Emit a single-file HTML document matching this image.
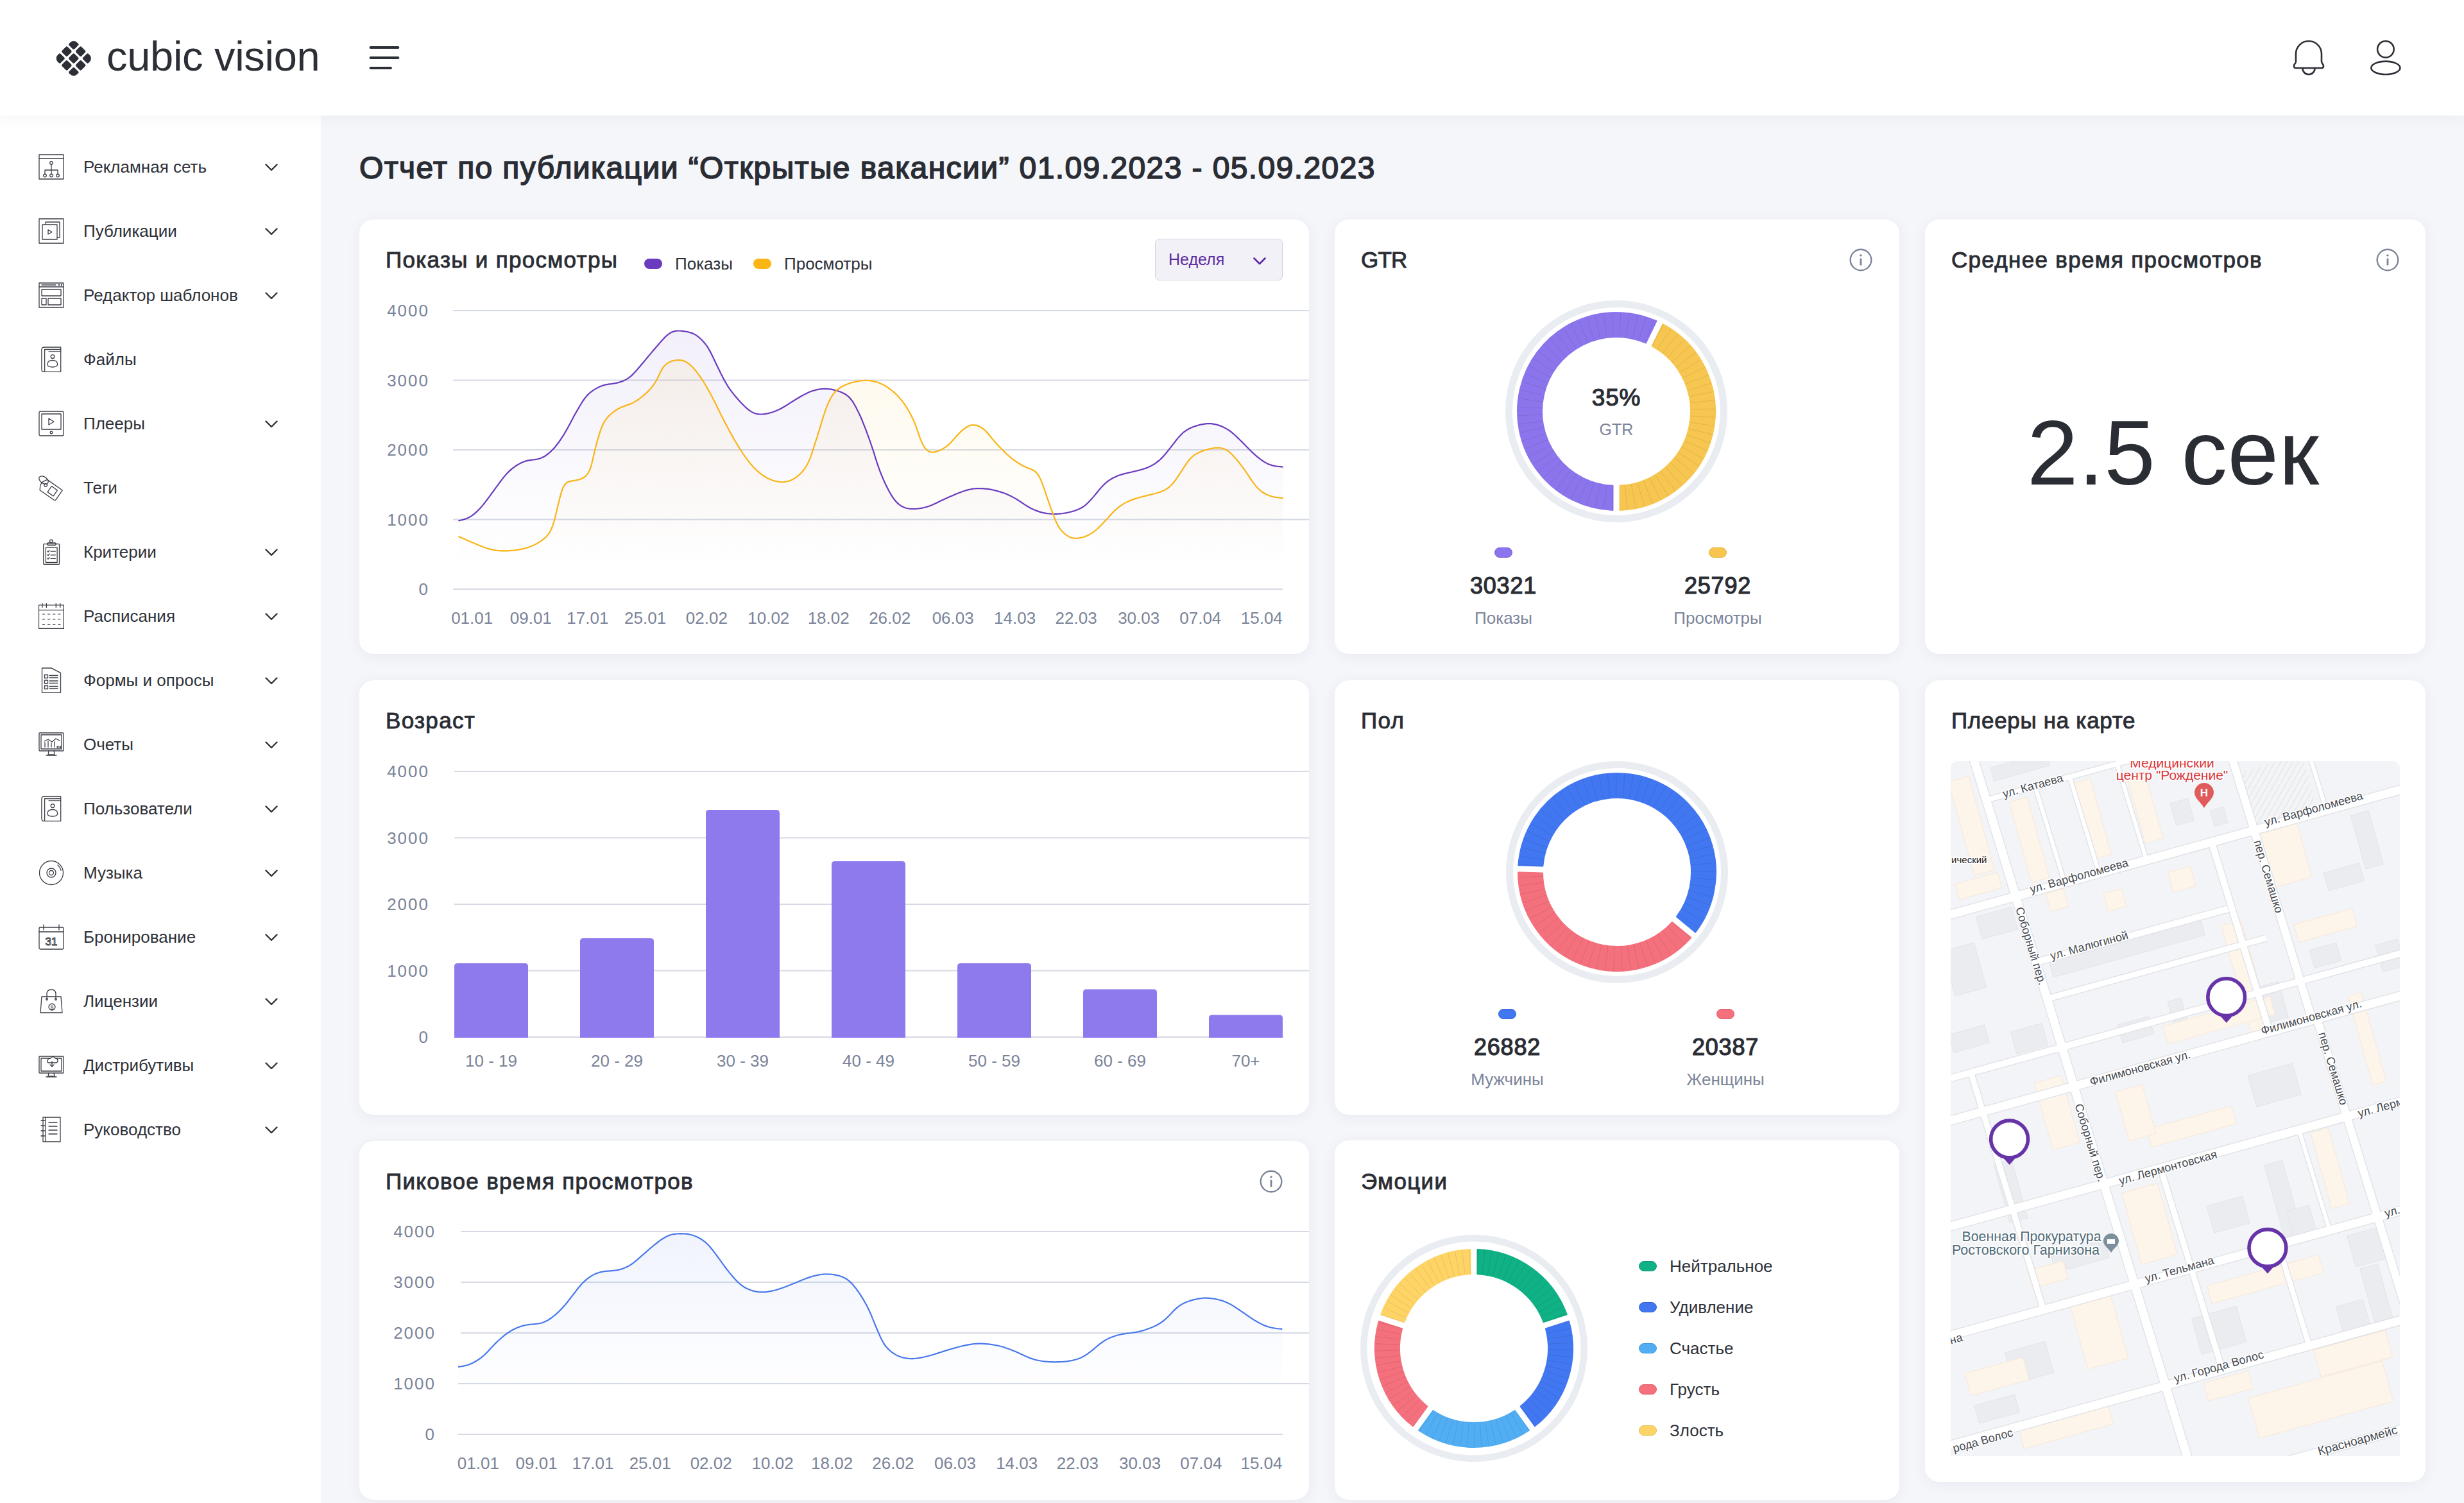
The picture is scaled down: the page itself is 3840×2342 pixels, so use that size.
<!DOCTYPE html><html><head><meta charset="utf-8"><style>
*{box-sizing:border-box;margin:0;padding:0}
html,body{width:3840px;height:2342px;overflow:hidden;background:#f5f6fa;font-family:"Liberation Sans", sans-serif;color:#2c2f36}
.abs{position:absolute}
.hdr{position:absolute;left:0;top:0;width:3840px;height:180px;background:#fff;box-shadow:0 6px 22px rgba(30,40,80,.045);z-index:3}
.side{position:absolute;left:0;top:180px;width:500px;height:2162px;background:#fff;z-index:1}
.item{position:absolute;left:60px;height:40px;width:400px}
.item svg.ic{position:absolute;left:0;top:0}
.item .t{position:absolute;left:70px;top:0;line-height:40px;font-size:26px;color:#2e3138;white-space:nowrap}
.item .ch{position:absolute;left:353px;top:13px}
.card{position:absolute;background:#fff;border-radius:22px;box-shadow:0 4px 22px rgba(40,50,90,.06)}
.ttl{position:absolute;font-size:35px;font-weight:400;color:#2a2d34;white-space:nowrap;line-height:40px;letter-spacing:1.3px;-webkit-text-stroke:0.9px #2a2d34;transform:translate(1px,-1px)}
.ax{position:absolute;font-size:26px;color:#7a8398;white-space:nowrap;line-height:30px}
.num{position:absolute;font-size:36px;font-weight:400;color:#2a2d34;text-align:center;line-height:40px;letter-spacing:0.8px;-webkit-text-stroke:1.2px #2a2d34}
.lbl{position:absolute;font-size:26px;color:#7b8499;text-align:center;line-height:30px}
.info{position:absolute}
</style></head><body>
<div class="hdr"><svg class="abs" style="left:0;top:0" width="160" height="180"><defs><clipPath id="lg"><rect x="93.30" y="69.50" width="43" height="43" rx="8"/></clipPath></defs><g transform="rotate(45 114.8 91)" clip-path="url(#lg)" fill="#2c2f36"><rect x="93.30" y="69.50" width="12.20" height="12.20" rx="2.2"/><rect x="108.70" y="69.50" width="12.20" height="12.20" rx="2.2"/><rect x="124.10" y="69.50" width="12.20" height="12.20" rx="2.2"/><rect x="93.30" y="84.90" width="12.20" height="12.20" rx="2.2"/><rect x="108.70" y="84.90" width="12.20" height="12.20" rx="2.2"/><rect x="124.10" y="84.90" width="12.20" height="12.20" rx="2.2"/><rect x="93.30" y="100.30" width="12.20" height="12.20" rx="2.2"/><rect x="108.70" y="100.30" width="12.20" height="12.20" rx="2.2"/><rect x="124.10" y="100.30" width="12.20" height="12.20" rx="2.2"/></g></svg><div class="abs" style="left:166px;top:50px;font-size:65px;line-height:76px;color:#2c2f36;letter-spacing:-0.3px">cubic vision</div><svg class="abs" style="left:575px;top:70px" width="50" height="40"><g stroke="#2c2f36" stroke-width="3.8" stroke-linecap="round"><line x1="2.5" y1="4" x2="45.5" y2="4"/><line x1="2.5" y1="20" x2="45.5" y2="20"/><line x1="2.5" y1="36" x2="34" y2="36"/></g></svg><svg class="abs" style="left:3570px;top:60px" width="56" height="64" viewBox="0 0 56 64"><g fill="none" stroke="#2c2f36" stroke-width="2.6" stroke-linejoin="round"><path d="M8,36 V24 A20,20 0 0 1 48,24 V36 Q48,38 50,40 Q51,41 51,43 Q51,46 48,46 H8 Q5,46 5,43 Q5,41 6,40 Q8,38 8,36 Z"/><path d="M18.5,46.5 A9.5,9.5 0 0 0 37.5,46.5"/></g></svg><svg class="abs" style="left:3690px;top:58px" width="56" height="64" viewBox="0 0 56 64"><g fill="none" stroke="#2c2f36" stroke-width="2.6"><circle cx="27.9" cy="18.8" r="12.8"/><ellipse cx="27.9" cy="47.8" rx="22.6" ry="10.2"/></g></svg></div><div class="side"></div><div class="item" style="top:240px;z-index:2"><svg class="ic" width="40" height="40" viewBox="0 0 40 40" fill="none" stroke="#3b3e46" stroke-width="1.3" stroke-linejoin="round" stroke-linecap="round"><rect x="1" y="1" width="38" height="38"/><line x1="1" y1="7" x2="39" y2="7"/><circle cx="20" cy="14" r="2.3"/><line x1="20" y1="16.3" x2="20" y2="32"/><path d="M10,32 V25 H30 V32"/><circle cx="10" cy="33.5" r="2.3"/><circle cx="20" cy="33.5" r="2.3"/><circle cx="30" cy="33.5" r="2.3"/></svg><div class="t">Рекламная сеть</div><div class="ch"><svg width="20" height="12" viewBox="0 0 20 12"><path d="M1.5,1.5 L10,10 L18.5,1.5" fill="none" stroke="#2e3138" stroke-width="2.4" stroke-linecap="round" stroke-linejoin="round"/></svg></div></div><div class="item" style="top:340px;z-index:2"><svg class="ic" width="40" height="40" viewBox="0 0 40 40" fill="none" stroke="#3b3e46" stroke-width="1.3" stroke-linejoin="round" stroke-linecap="round"><rect x="1" y="1" width="38" height="38"/><rect x="11" y="6" width="22" height="24"/><rect x="6" y="10" width="23" height="23" fill="#fff"/><path d="M15,18 L21,21.5 L15,25 Z"/></svg><div class="t">Публикации</div><div class="ch"><svg width="20" height="12" viewBox="0 0 20 12"><path d="M1.5,1.5 L10,10 L18.5,1.5" fill="none" stroke="#2e3138" stroke-width="2.4" stroke-linecap="round" stroke-linejoin="round"/></svg></div></div><div class="item" style="top:440px;z-index:2"><svg class="ic" width="40" height="40" viewBox="0 0 40 40" fill="none" stroke="#3b3e46" stroke-width="1.3" stroke-linejoin="round" stroke-linecap="round"><rect x="1" y="1" width="38" height="38"/><line x1="1" y1="7" x2="39" y2="7"/><line x1="5" y1="4" x2="27" y2="4"/><circle cx="32" cy="4" r=".6"/><circle cx="36" cy="4" r=".6"/><rect x="5" y="11" width="30" height="10"/><rect x="5" y="25" width="7" height="10"/><rect x="15" y="25" width="20" height="10"/></svg><div class="t">Редактор шаблонов</div><div class="ch"><svg width="20" height="12" viewBox="0 0 20 12"><path d="M1.5,1.5 L10,10 L18.5,1.5" fill="none" stroke="#2e3138" stroke-width="2.4" stroke-linecap="round" stroke-linejoin="round"/></svg></div></div><div class="item" style="top:540px;z-index:2"><svg class="ic" width="40" height="40" viewBox="0 0 40 40" fill="none" stroke="#3b3e46" stroke-width="1.3" stroke-linejoin="round" stroke-linecap="round"><path d="M9,1 H34.7 V39.4 H9 Q4.9,39.4 4.9,35.4 V5 Q4.9,1 9,1 Z"/><line x1="9.6" y1="4.5" x2="9.6" y2="39.4"/><path d="M9.6,4.5 H34.7"/><line x1="16" y1="7.7" x2="34.7" y2="7.7" stroke-width="1"/><circle cx="22" cy="15.7" r="2.8"/><path d="M14,27.5 Q14,21.5 21.8,21.5 Q29.6,21.5 29.6,27.5 Q29.6,32 21.8,32 Q14,32 14,27.5 Z"/></svg><div class="t">Файлы</div></div><div class="item" style="top:640px;z-index:2"><svg class="ic" width="40" height="40" viewBox="0 0 40 40" fill="none" stroke="#3b3e46" stroke-width="1.3" stroke-linejoin="round" stroke-linecap="round"><rect x="1" y="1" width="38" height="38" rx="2"/><rect x="5" y="5" width="30" height="24"/><path d="M16,12 L24,17 L16,22 Z"/><circle cx="20" cy="34" r="1.8"/></svg><div class="t">Плееры</div><div class="ch"><svg width="20" height="12" viewBox="0 0 20 12"><path d="M1.5,1.5 L10,10 L18.5,1.5" fill="none" stroke="#2e3138" stroke-width="2.4" stroke-linecap="round" stroke-linejoin="round"/></svg></div></div><div class="item" style="top:740px;z-index:2"><svg class="ic" width="40" height="40" viewBox="0 0 40 40" fill="none" stroke="#3b3e46" stroke-width="1.3" stroke-linejoin="round" stroke-linecap="round"><g transform="translate(18.5 23) rotate(35)"><path d="M-17,-3 L-13,-10 L16,-10 L16,10 L-13,10 L-17,3 Z"/><rect x="-1.5" y="-5.5" width="11" height="11"/><circle cx="-10" cy="-1.5" r="2.3"/></g><ellipse cx="8" cy="8" rx="8" ry="5" transform="rotate(35 8 8)"/></svg><div class="t">Теги</div></div><div class="item" style="top:840px;z-index:2"><svg class="ic" width="40" height="40" viewBox="0 0 40 40" fill="none" stroke="#3b3e46" stroke-width="1.3" stroke-linejoin="round" stroke-linecap="round"><rect x="7.7" y="7.6" width="24.8" height="31.7" rx="1"/><rect x="11.4" y="13.2" width="17.7" height="23.3"/><rect x="13.3" y="5.8" width="14" height="3.7" rx="1.8"/><circle cx="19.8" cy="3.2" r="2.3"/><path d="M13.8,18.8 l1.2,1.2 l2,-2.6 M13.8,24.4 l1.2,1.2 l2,-2.6 M13.8,30 l1.2,1.2 l2,-2.6"/><line x1="19" y1="19.2" x2="26.3" y2="19.2"/><line x1="19" y1="24.8" x2="26.3" y2="24.8"/><line x1="19" y1="30.4" x2="26.3" y2="30.4"/></svg><div class="t">Критерии</div><div class="ch"><svg width="20" height="12" viewBox="0 0 20 12"><path d="M1.5,1.5 L10,10 L18.5,1.5" fill="none" stroke="#2e3138" stroke-width="2.4" stroke-linecap="round" stroke-linejoin="round"/></svg></div></div><div class="item" style="top:940px;z-index:2"><svg class="ic" width="40" height="40" viewBox="0 0 40 40" fill="none" stroke="#3b3e46" stroke-width="1.3" stroke-linejoin="round" stroke-linecap="round"><rect x="0.5" y="2.8" width="38.9" height="36.6"/><line x1="0.5" y1="10.7" x2="39.4" y2="10.7"/><line x1="5.8" y1="0" x2="5.8" y2="6.4"/><line x1="12.4" y1="0" x2="12.4" y2="6.4"/><line x1="27.3" y1="0" x2="27.3" y2="6.4"/><line x1="33.8" y1="0" x2="33.8" y2="6.4"/><g stroke-dasharray="3.3 4.8" stroke-width="1.1"><line x1="6.4" y1="17" x2="36" y2="17"/><line x1="6.4" y1="25" x2="36" y2="25"/><line x1="6.4" y1="33.4" x2="36" y2="33.4"/></g></svg><div class="t">Расписания</div><div class="ch"><svg width="20" height="12" viewBox="0 0 20 12"><path d="M1.5,1.5 L10,10 L18.5,1.5" fill="none" stroke="#2e3138" stroke-width="2.4" stroke-linecap="round" stroke-linejoin="round"/></svg></div></div><div class="item" style="top:1040px;z-index:2"><svg class="ic" width="40" height="40" viewBox="0 0 40 40" fill="none" stroke="#3b3e46" stroke-width="1.3" stroke-linejoin="round" stroke-linecap="round"><path d="M5.5,1 H20 L34.5,8.5 V39.5 H5.5 Z" /><path d="M20,1 L34.5,8.5"/><rect x="9.5" y="11.5" width="5" height="5"/><rect x="9.5" y="20" width="5" height="5"/><rect x="9.5" y="28.5" width="5" height="5"/><line x1="17" y1="12.5" x2="30" y2="12.5"/><line x1="17" y1="16" x2="30" y2="16"/><line x1="17" y1="21" x2="30" y2="21"/><line x1="17" y1="24.5" x2="30" y2="24.5"/><line x1="17" y1="29.5" x2="30" y2="29.5"/><line x1="17" y1="33" x2="30" y2="33"/></svg><div class="t">Формы и опросы</div><div class="ch"><svg width="20" height="12" viewBox="0 0 20 12"><path d="M1.5,1.5 L10,10 L18.5,1.5" fill="none" stroke="#2e3138" stroke-width="2.4" stroke-linecap="round" stroke-linejoin="round"/></svg></div></div><div class="item" style="top:1140px;z-index:2"><svg class="ic" width="40" height="40" viewBox="0 0 40 40" fill="none" stroke="#3b3e46" stroke-width="1.3" stroke-linejoin="round" stroke-linecap="round"><rect x="1" y="2" width="38" height="28" rx="1"/><rect x="4" y="5" width="32" height="22"/><path d="M9,15 L15,12 L21,16 L27,11 L33,14"/><line x1="10" y1="24" x2="10" y2="17"/><line x1="15" y1="24" x2="15" y2="15"/><line x1="20" y1="24" x2="20" y2="18"/><line x1="25" y1="24" x2="25" y2="16"/><circle cx="30" cy="24" r="1"/><circle cx="34" cy="24" r="1"/><path d="M16,30 L15,36 H25 L24,30"/><line x1="12" y1="37" x2="28" y2="37"/></svg><div class="t">Очеты</div><div class="ch"><svg width="20" height="12" viewBox="0 0 20 12"><path d="M1.5,1.5 L10,10 L18.5,1.5" fill="none" stroke="#2e3138" stroke-width="2.4" stroke-linecap="round" stroke-linejoin="round"/></svg></div></div><div class="item" style="top:1240px;z-index:2"><svg class="ic" width="40" height="40" viewBox="0 0 40 40" fill="none" stroke="#3b3e46" stroke-width="1.3" stroke-linejoin="round" stroke-linecap="round"><path d="M9,1 H34.7 V39.4 H9 Q4.9,39.4 4.9,35.4 V5 Q4.9,1 9,1 Z"/><line x1="9.6" y1="4.5" x2="9.6" y2="39.4"/><path d="M9.6,4.5 H34.7"/><line x1="16" y1="7.7" x2="34.7" y2="7.7" stroke-width="1"/><circle cx="22" cy="15.7" r="2.8"/><path d="M14,27.5 Q14,21.5 21.8,21.5 Q29.6,21.5 29.6,27.5 Q29.6,32 21.8,32 Q14,32 14,27.5 Z"/></svg><div class="t">Пользователи</div><div class="ch"><svg width="20" height="12" viewBox="0 0 20 12"><path d="M1.5,1.5 L10,10 L18.5,1.5" fill="none" stroke="#2e3138" stroke-width="2.4" stroke-linecap="round" stroke-linejoin="round"/></svg></div></div><div class="item" style="top:1340px;z-index:2"><svg class="ic" width="40" height="40" viewBox="0 0 40 40" fill="none" stroke="#3b3e46" stroke-width="1.3" stroke-linejoin="round" stroke-linecap="round"><circle cx="20" cy="20" r="18.5"/><circle cx="20" cy="20" r="7"/><circle cx="20" cy="20" r="3.5"/><path d="M30,8 A15,15 0 0 1 35,16"/></svg><div class="t">Музыка</div><div class="ch"><svg width="20" height="12" viewBox="0 0 20 12"><path d="M1.5,1.5 L10,10 L18.5,1.5" fill="none" stroke="#2e3138" stroke-width="2.4" stroke-linecap="round" stroke-linejoin="round"/></svg></div></div><div class="item" style="top:1440px;z-index:2"><svg class="ic" width="40" height="40" viewBox="0 0 40 40" fill="none" stroke="#3b3e46" stroke-width="1.3" stroke-linejoin="round" stroke-linecap="round"><rect x="1" y="5" width="38" height="34" rx="2"/><line x1="1" y1="12" x2="39" y2="12"/><line x1="8" y1="1" x2="8" y2="9"/><line x1="32" y1="1" x2="32" y2="9"/><text x="20" y="33" font-family="Liberation Sans" font-size="17" text-anchor="middle" fill="none" stroke="#3b3e46" stroke-width="1">31</text></svg><div class="t">Бронирование</div><div class="ch"><svg width="20" height="12" viewBox="0 0 20 12"><path d="M1.5,1.5 L10,10 L18.5,1.5" fill="none" stroke="#2e3138" stroke-width="2.4" stroke-linecap="round" stroke-linejoin="round"/></svg></div></div><div class="item" style="top:1540px;z-index:2"><svg class="ic" width="40" height="40" viewBox="0 0 40 40" fill="none" stroke="#3b3e46" stroke-width="1.3" stroke-linejoin="round" stroke-linecap="round"><path d="M5,13 H35 L37,38 H3 Z"/><path d="M13,17 V9 Q13,2 20,2 Q27,2 27,9 V17"/><circle cx="13" cy="17" r="1.3"/><circle cx="27" cy="17" r="1.3"/><circle cx="21" cy="29" r="5"/><text x="21" y="32.5" font-family="Liberation Sans" font-size="9" text-anchor="middle" fill="#3b3e46" stroke="none">$</text></svg><div class="t">Лицензии</div><div class="ch"><svg width="20" height="12" viewBox="0 0 20 12"><path d="M1.5,1.5 L10,10 L18.5,1.5" fill="none" stroke="#2e3138" stroke-width="2.4" stroke-linecap="round" stroke-linejoin="round"/></svg></div></div><div class="item" style="top:1640px;z-index:2"><svg class="ic" width="40" height="40" viewBox="0 0 40 40" fill="none" stroke="#3b3e46" stroke-width="1.3" stroke-linejoin="round" stroke-linecap="round"><rect x="1" y="6" width="38" height="26" rx="1"/><rect x="4" y="9" width="32" height="20"/><path d="M14,14 Q14,9 19,9 Q22,4 26,9 Q30,9 30,13 Q30,16 26,16 H16 Q14,16 14,14 Z" fill="#fff"/><line x1="21" y1="14" x2="21" y2="22"/><path d="M18,19 L21,22 L24,19"/><path d="M16,32 L15,37 H25 L24,32"/><line x1="12" y1="38" x2="28" y2="38"/></svg><div class="t">Дистрибутивы</div><div class="ch"><svg width="20" height="12" viewBox="0 0 20 12"><path d="M1.5,1.5 L10,10 L18.5,1.5" fill="none" stroke="#2e3138" stroke-width="2.4" stroke-linecap="round" stroke-linejoin="round"/></svg></div></div><div class="item" style="top:1740px;z-index:2"><svg class="ic" width="40" height="40" viewBox="0 0 40 40" fill="none" stroke="#3b3e46" stroke-width="1.3" stroke-linejoin="round" stroke-linecap="round"><rect x="7" y="1" width="27" height="38"/><line x1="11" y1="1" x2="11" y2="39"/><g><line x1="4" y1="6" x2="10" y2="6"/><line x1="4" y1="14" x2="10" y2="14"/><line x1="4" y1="22" x2="10" y2="22"/><line x1="4" y1="30" x2="10" y2="30"/></g><line x1="16" y1="9" x2="29" y2="9"/><line x1="16" y1="15" x2="29" y2="15"/><line x1="16" y1="21" x2="29" y2="21"/><line x1="16" y1="27" x2="29" y2="27"/></svg><div class="t">Руководство</div><div class="ch"><svg width="20" height="12" viewBox="0 0 20 12"><path d="M1.5,1.5 L10,10 L18.5,1.5" fill="none" stroke="#2e3138" stroke-width="2.4" stroke-linecap="round" stroke-linejoin="round"/></svg></div></div><div class="abs" style="left:560px;top:234px;font-size:48px;font-weight:400;line-height:56px;color:#2a2d34;white-space:nowrap;letter-spacing:1.4px;-webkit-text-stroke:1.6px #2a2d34">Отчет по публикации “Открытые вакансии” 01.09.2023 - 05.09.2023</div><div class="card" style="left:560px;top:342px;width:1480px;height:677px"></div><div class="ttl" style="left:600px;top:386px">Показы и просмотры</div><div class="abs" style="left:1004px;top:403px;width:28px;height:16px;border-radius:8px;background:#6a3bbf"></div><div class="ax" style="left:1052px;top:396px;color:#2e3138">Показы</div><div class="abs" style="left:1174px;top:403px;width:28px;height:16px;border-radius:8px;background:#fbb515"></div><div class="ax" style="left:1222px;top:396px;color:#2e3138">Просмотры</div><div class="abs" style="left:1800px;top:372px;width:199px;height:65px;border-radius:7px;background:#f3f1f8;border:1.6px solid #cfd3df"></div><div class="abs" style="left:1821px;top:389px;font-size:25px;line-height:30px;color:#5b2aa0">Неделя</div><div class="abs" style="left:1953px;top:399px"><svg width="20" height="12" viewBox="0 0 20 12"><path d="M1.5,1.5 L10,10 L18.5,1.5" fill="none" stroke="#5b2aa0" stroke-width="2.6" stroke-linecap="round" stroke-linejoin="round"/></svg></div><div class="ax" style="left:549px;width:120px;text-align:right;top:469px;letter-spacing:2px">4000</div><div class="ax" style="left:549px;width:120px;text-align:right;top:577.5px;letter-spacing:2px">3000</div><div class="ax" style="left:549px;width:120px;text-align:right;top:686px;letter-spacing:2px">2000</div><div class="ax" style="left:549px;width:120px;text-align:right;top:794.5px;letter-spacing:2px">1000</div><div class="ax" style="left:549px;width:120px;text-align:right;top:903px;letter-spacing:2px">0</div><svg class="abs" style="left:0;top:0" width="2100" height="1100"><defs><linearGradient id="gp" x1="0" y1="0" x2="0" y2="1" gradientUnits="objectBoundingBox"><stop offset="0" stop-color="#6c4cc4" stop-opacity="0.085"/><stop offset="1" stop-color="#6c4cc4" stop-opacity="0"/></linearGradient><linearGradient id="gy" x1="0" y1="0" x2="0" y2="1"><stop offset="0" stop-color="#f5b820" stop-opacity="0.08"/><stop offset="1" stop-color="#f5b820" stop-opacity="0"/></linearGradient></defs><line x1="706" y1="484" x2="2040" y2="484" stroke="#d6dae3" stroke-width="2"/><line x1="706" y1="592.5" x2="2040" y2="592.5" stroke="#d6dae3" stroke-width="2"/><line x1="706" y1="701" x2="2040" y2="701" stroke="#d6dae3" stroke-width="2"/><line x1="706" y1="809.5" x2="2040" y2="809.5" stroke="#d6dae3" stroke-width="2"/><line x1="706" y1="918" x2="1999" y2="918" stroke="#d6dae3" stroke-width="2"/><path d="M714.4,811.3 L718.8,810.5 L720.9,809.9 L723.4,809.3 L726.0,808.4 L728.7,807.3 L731.3,806.1 L733.9,804.6 L736.3,802.9 L738.7,801.1 L740.9,799.1 L743.1,797.1 L745.3,795.0 L747.3,792.9 L749.4,790.7 L751.4,788.4 L753.3,786.1 L755.2,783.8 L757.0,781.4 L758.8,779.0 L760.6,776.6 L762.4,774.2 L764.2,771.8 L765.9,769.4 L767.7,766.9 L769.5,764.5 L771.2,762.1 L773.0,759.7 L774.8,757.2 L776.5,754.8 L778.3,752.4 L780.1,750.0 L781.9,747.6 L783.7,745.2 L785.6,742.9 L787.5,740.6 L789.5,738.3 L791.6,736.2 L793.7,734.1 L795.9,732.1 L798.2,730.2 L800.6,728.4 L803.0,726.6 L805.5,725.0 L808.1,723.4 L810.7,722.0 L813.3,720.7 L816.1,719.5 L818.9,718.6 L821.7,717.8 L824.6,717.2 L827.6,716.8 L830.5,716.5 L833.5,716.2 L836.4,715.7 L839.2,715.0 L842.0,714.2 L844.8,713.0 L847.4,711.7 L850.0,710.2 L852.4,708.5 L854.8,706.7 L857.0,704.8 L859.2,702.8 L861.3,700.6 L863.3,698.4 L865.3,696.2 L867.2,693.8 L869.0,691.5 L870.8,689.0 L872.5,686.6 L874.2,684.1 L875.9,681.6 L877.5,679.1 L879.1,676.6 L880.6,674.0 L882.1,671.4 L883.6,668.8 L885.0,666.2 L886.5,663.5 L887.9,660.9 L889.3,658.2 L890.7,655.6 L892.1,652.9 L893.5,650.3 L894.9,647.6 L896.4,645.0 L897.9,642.4 L899.4,639.8 L900.9,637.2 L902.4,634.6 L903.9,632.0 L905.5,629.5 L907.0,626.9 L908.7,624.4 L910.4,622.0 L912.2,619.6 L914.1,617.3 L916.1,615.1 L918.2,613.0 L920.5,611.1 L922.9,609.3 L925.3,607.6 L927.9,606.1 L930.5,604.6 L933.1,603.3 L935.9,602.1 L938.6,601.0 L941.4,600.1 L944.3,599.3 L947.2,598.8 L950.1,598.4 L953.0,598.1 L955.9,597.7 L958.9,597.2 L961.8,596.6 L964.6,595.8 L967.5,594.9 L970.3,593.9 L973.0,592.8 L975.7,591.4 L978.2,589.9 L980.6,588.2 L982.9,586.4 L985.1,584.4 L987.2,582.3 L989.3,580.1 L991.3,577.9 L993.3,575.6 L995.2,573.3 L997.2,571.1 L999.1,568.8 L1001.0,566.5 L1003.0,564.2 L1004.9,561.9 L1006.8,559.6 L1008.7,557.2 L1010.6,554.9 L1012.6,552.6 L1014.5,550.4 L1016.4,548.1 L1018.4,545.8 L1020.4,543.5 L1022.3,541.2 L1024.3,539.0 L1026.2,536.7 L1028.2,534.4 L1030.1,532.2 L1032.1,529.9 L1034.2,527.7 L1036.2,525.6 L1038.4,523.5 L1040.6,521.6 L1043.0,519.8 L1045.5,518.3 L1048.1,517.1 L1050.8,516.2 L1053.6,515.7 L1056.5,515.5 L1059.5,515.5 L1062.4,515.7 L1065.4,516.1 L1068.3,516.5 L1071.3,517.0 L1074.2,517.7 L1077.0,518.6 L1079.7,519.6 L1082.4,520.9 L1084.9,522.4 L1087.3,524.1 L1089.7,526.0 L1091.9,528.0 L1094.0,530.0 L1096.1,532.2 L1098.0,534.5 L1099.9,536.8 L1101.6,539.2 L1103.3,541.7 L1104.8,544.3 L1106.3,546.9 L1107.7,549.5 L1109.1,552.2 L1110.4,554.9 L1111.7,557.6 L1112.9,560.3 L1114.2,563.0 L1115.5,565.7 L1116.8,568.4 L1118.1,571.1 L1119.4,573.8 L1120.8,576.5 L1122.1,579.2 L1123.4,581.9 L1124.8,584.6 L1126.1,587.3 L1127.5,589.9 L1128.9,592.6 L1130.4,595.2 L1131.9,597.8 L1133.4,600.3 L1135.0,602.9 L1136.7,605.4 L1138.4,607.8 L1140.2,610.2 L1142.0,612.6 L1143.9,614.9 L1145.8,617.2 L1147.8,619.5 L1149.7,621.8 L1151.7,624.0 L1153.7,626.3 L1155.8,628.4 L1157.9,630.6 L1160.0,632.7 L1162.2,634.8 L1164.4,636.7 L1166.7,638.6 L1169.1,640.4 L1171.6,641.9 L1174.2,643.2 L1176.9,644.2 L1179.7,644.9 L1182.6,645.3 L1185.5,645.5 L1188.5,645.4 L1191.4,645.1 L1194.4,644.6 L1197.3,644.1 L1200.2,643.3 L1203.1,642.5 L1205.9,641.5 L1208.7,640.4 L1211.4,639.3 L1214.1,638.0 L1216.8,636.7 L1219.4,635.2 L1222.0,633.7 L1224.6,632.2 L1227.1,630.6 L1229.7,629.0 L1232.2,627.4 L1234.7,625.8 L1237.3,624.2 L1239.8,622.6 L1242.4,621.0 L1245.0,619.5 L1247.5,618.0 L1250.2,616.5 L1252.8,615.1 L1255.4,613.7 L1258.1,612.4 L1260.9,611.1 L1263.6,610.0 L1266.4,609.0 L1269.3,608.2 L1272.2,607.4 L1275.1,606.8 L1278.0,606.3 L1281.0,606.0 L1284.0,605.8 L1286.9,605.8 L1289.9,606.0 L1292.9,606.3 L1295.8,606.7 L1298.7,607.3 L1301.6,608.1 L1304.5,608.9 L1307.4,609.8 L1310.2,610.8 L1312.9,612.0 L1315.5,613.3 L1318.1,614.8 L1320.5,616.5 L1322.7,618.4 L1324.7,620.5 L1326.6,622.8 L1328.4,625.2 L1330.0,627.7 L1331.6,630.3 L1333.0,632.9 L1334.5,635.5 L1335.8,638.2 L1337.2,640.9 L1338.5,643.6 L1339.7,646.3 L1341.0,649.0 L1342.2,651.8 L1343.4,654.5 L1344.5,657.3 L1345.6,660.1 L1346.7,662.8 L1347.8,665.6 L1348.9,668.4 L1350.0,671.2 L1351.0,674.1 L1352.0,676.9 L1353.1,679.7 L1354.1,682.5 L1355.1,685.3 L1356.1,688.2 L1357.1,691.0 L1358.0,693.8 L1359.0,696.7 L1359.9,699.5 L1360.9,702.4 L1361.8,705.2 L1362.7,708.1 L1363.6,711.0 L1364.5,713.8 L1365.4,716.7 L1366.3,719.5 L1367.2,722.4 L1368.2,725.2 L1369.2,728.1 L1370.2,730.9 L1371.2,733.7 L1372.3,736.5 L1373.4,739.3 L1374.6,742.1 L1375.7,744.8 L1376.9,747.6 L1378.1,750.3 L1379.4,753.1 L1380.7,755.8 L1382.0,758.5 L1383.3,761.1 L1384.7,763.8 L1386.1,766.4 L1387.6,769.0 L1389.2,771.6 L1390.8,774.1 L1392.5,776.6 L1394.3,779.0 L1396.2,781.2 L1398.2,783.4 L1400.4,785.4 L1402.7,787.2 L1405.1,788.8 L1407.7,790.1 L1410.5,791.2 L1413.3,792.0 L1416.2,792.5 L1419.1,792.9 L1422.1,793.0 L1425.0,793.0 L1428.0,792.8 L1431.0,792.5 L1434.0,792.1 L1436.9,791.6 L1439.8,791.0 L1442.7,790.3 L1445.6,789.4 L1448.4,788.5 L1451.2,787.4 L1454.0,786.3 L1456.7,785.0 L1459.4,783.8 L1462.1,782.4 L1464.8,781.1 L1467.5,779.8 L1470.2,778.5 L1472.9,777.2 L1475.6,776.0 L1478.4,774.7 L1481.1,773.5 L1483.9,772.4 L1486.6,771.2 L1489.4,770.0 L1492.2,768.9 L1495.0,767.8 L1497.8,766.7 L1500.6,765.7 L1503.4,764.7 L1506.3,763.9 L1509.2,763.1 L1512.1,762.5 L1515.0,761.9 L1518.0,761.5 L1521.0,761.2 L1523.9,761.1 L1526.9,761.1 L1529.9,761.1 L1532.9,761.3 L1535.9,761.6 L1538.9,761.9 L1541.8,762.4 L1544.8,762.9 L1547.7,763.5 L1550.6,764.1 L1553.5,764.9 L1556.4,765.7 L1559.3,766.6 L1562.1,767.5 L1564.9,768.5 L1567.7,769.6 L1570.5,770.8 L1573.2,772.0 L1575.9,773.3 L1578.6,774.6 L1581.2,776.1 L1583.8,777.6 L1586.3,779.2 L1588.8,780.9 L1591.3,782.5 L1593.8,784.2 L1596.3,785.9 L1598.8,787.4 L1601.4,789.0 L1604.0,790.5 L1606.6,791.9 L1609.3,793.2 L1612.0,794.5 L1614.8,795.6 L1617.6,796.6 L1620.4,797.6 L1623.3,798.4 L1626.2,799.1 L1629.1,799.6 L1632.1,800.1 L1635.1,800.5 L1638.0,800.7 L1641.0,800.8 L1644.0,800.9 L1647.0,800.8 L1650.0,800.6 L1653.0,800.3 L1656.0,800.0 L1658.9,799.6 L1661.9,799.1 L1664.8,798.5 L1667.7,797.8 L1670.6,797.1 L1673.5,796.3 L1676.3,795.3 L1679.1,794.3 L1681.9,793.1 L1684.5,791.8 L1687.1,790.3 L1689.5,788.6 L1691.9,786.8 L1694.1,784.8 L1696.2,782.7 L1698.3,780.6 L1700.3,778.4 L1702.3,776.1 L1704.3,773.9 L1706.2,771.6 L1708.1,769.3 L1710.0,767.0 L1711.9,764.6 L1713.9,762.3 L1715.8,760.1 L1717.8,757.8 L1719.9,755.7 L1722.0,753.6 L1724.3,751.7 L1726.6,749.8 L1729.0,748.1 L1731.5,746.5 L1734.1,745.0 L1736.8,743.7 L1739.5,742.4 L1742.3,741.3 L1745.1,740.3 L1747.9,739.4 L1750.8,738.6 L1753.7,737.8 L1756.6,737.1 L1759.6,736.4 L1762.5,735.7 L1765.4,735.1 L1768.3,734.4 L1771.2,733.7 L1774.1,732.9 L1777.0,732.2 L1779.9,731.4 L1782.8,730.5 L1785.6,729.6 L1788.4,728.5 L1791.1,727.3 L1793.8,726.0 L1796.4,724.6 L1799.0,723.0 L1801.4,721.3 L1803.8,719.5 L1806.2,717.7 L1808.4,715.7 L1810.5,713.6 L1812.6,711.5 L1814.6,709.2 L1816.6,707.0 L1818.5,704.6 L1820.3,702.3 L1822.2,699.9 L1824.0,697.6 L1825.9,695.2 L1827.7,692.9 L1829.6,690.5 L1831.4,688.1 L1833.2,685.7 L1835.1,683.4 L1837.0,681.1 L1839.0,678.9 L1841.1,676.7 L1843.2,674.7 L1845.5,672.8 L1848.0,671.1 L1850.5,669.5 L1853.1,668.1 L1855.8,666.8 L1858.5,665.6 L1861.3,664.5 L1864.1,663.6 L1867.0,662.7 L1869.9,661.9 L1872.8,661.3 L1875.7,660.8 L1878.7,660.4 L1881.6,660.2 L1884.6,660.1 L1887.6,660.2 L1890.5,660.6 L1893.4,661.1 L1896.3,661.8 L1899.2,662.6 L1902.0,663.6 L1904.8,664.7 L1907.5,666.0 L1910.1,667.4 L1912.7,668.9 L1915.2,670.5 L1917.6,672.2 L1920.0,674.1 L1922.2,676.0 L1924.5,678.0 L1926.7,680.0 L1928.8,682.1 L1931.0,684.2 L1933.1,686.3 L1935.3,688.4 L1937.4,690.5 L1939.5,692.6 L1941.6,694.8 L1943.7,696.9 L1945.8,699.1 L1947.9,701.2 L1950.0,703.3 L1952.2,705.4 L1954.4,707.4 L1956.6,709.4 L1958.9,711.3 L1961.3,713.2 L1963.6,715.1 L1966.0,716.8 L1968.5,718.5 L1971.0,720.1 L1973.6,721.6 L1976.3,722.9 L1979.0,724.0 L1981.8,724.9 L1984.7,725.7 L1987.5,726.3 L1990.2,726.7 L1992.8,727.0 L1995.0,727.2 L1999.5,727.6 L1999.5,727.6 L1999.5,880 L714.4,880 Z" fill="url(#gp)"/><path d="M714.4,835.9 L718.5,837.7 L720.5,838.6 L722.9,839.6 L725.5,840.8 L728.2,841.9 L730.9,843.1 L733.7,844.2 L736.4,845.4 L739.2,846.6 L742.0,847.7 L744.7,848.9 L747.5,850.0 L750.3,851.1 L753.1,852.2 L755.9,853.2 L758.7,854.2 L761.6,855.1 L764.5,855.9 L767.4,856.6 L770.3,857.2 L773.2,857.6 L776.2,858.0 L779.2,858.2 L782.2,858.4 L785.2,858.4 L788.2,858.4 L791.2,858.3 L794.2,858.2 L797.1,857.9 L800.1,857.7 L803.1,857.3 L806.1,856.9 L809.0,856.4 L812.0,855.8 L814.9,855.2 L817.8,854.4 L820.7,853.6 L823.5,852.7 L826.3,851.7 L829.1,850.6 L831.8,849.4 L834.5,848.1 L837.1,846.7 L839.7,845.1 L842.3,843.6 L844.7,841.9 L847.1,840.1 L849.4,838.2 L851.5,836.1 L853.4,833.9 L855.2,831.6 L856.8,829.1 L858.2,826.4 L859.4,823.7 L860.6,821.0 L861.6,818.2 L862.5,815.3 L863.4,812.5 L864.2,809.6 L865.0,806.7 L865.7,803.8 L866.4,800.9 L867.1,798.0 L867.8,795.0 L868.5,792.1 L869.2,789.2 L869.9,786.3 L870.6,783.4 L871.3,780.4 L872.0,777.5 L872.8,774.6 L873.5,771.7 L874.3,768.8 L875.2,766.0 L876.2,763.2 L877.3,760.4 L878.6,757.8 L880.1,755.5 L881.9,753.4 L884.0,751.8 L886.3,750.6 L888.9,749.8 L891.7,749.3 L894.5,748.9 L897.4,748.4 L900.3,747.8 L903.1,747.1 L905.8,746.1 L908.4,744.8 L910.8,743.3 L913.0,741.5 L915.0,739.4 L916.6,737.0 L918.0,734.5 L919.2,731.8 L920.3,729.0 L921.2,726.2 L922.0,723.3 L922.7,720.4 L923.4,717.5 L924.1,714.5 L924.8,711.6 L925.4,708.7 L926.1,705.8 L926.8,702.8 L927.4,699.9 L928.2,697.0 L928.9,694.1 L929.7,691.2 L930.5,688.3 L931.3,685.4 L932.2,682.6 L933.0,679.7 L933.9,676.8 L934.8,674.0 L935.7,671.1 L936.7,668.3 L937.8,665.5 L939.0,662.8 L940.3,660.1 L941.7,657.5 L943.3,654.9 L945.0,652.5 L946.9,650.2 L948.9,648.1 L951.1,646.0 L953.3,644.0 L955.6,642.2 L958.1,640.4 L960.6,638.8 L963.1,637.3 L965.7,635.8 L968.4,634.6 L971.2,633.4 L974.0,632.4 L976.8,631.4 L979.6,630.4 L982.4,629.4 L985.1,628.2 L987.8,626.9 L990.4,625.4 L992.9,623.8 L995.3,622.1 L997.7,620.3 L1000.1,618.5 L1002.4,616.6 L1004.7,614.6 L1006.9,612.6 L1009.1,610.5 L1011.2,608.4 L1013.2,606.3 L1015.2,604.0 L1017.1,601.7 L1018.8,599.3 L1020.5,596.8 L1022.1,594.3 L1023.5,591.7 L1024.9,589.0 L1026.2,586.3 L1027.5,583.6 L1028.7,580.9 L1030.0,578.2 L1031.4,575.6 L1033.0,573.1 L1034.8,570.8 L1036.8,568.7 L1039.0,566.8 L1041.4,565.2 L1044.0,563.9 L1046.7,562.9 L1049.5,562.0 L1052.4,561.5 L1055.3,561.1 L1058.2,561.1 L1061.1,561.3 L1063.9,561.9 L1066.7,562.8 L1069.3,564.1 L1071.8,565.6 L1074.1,567.3 L1076.4,569.3 L1078.5,571.3 L1080.6,573.5 L1082.5,575.7 L1084.5,578.0 L1086.3,580.4 L1088.1,582.8 L1089.9,585.2 L1091.6,587.6 L1093.3,590.1 L1095.0,592.6 L1096.6,595.2 L1098.1,597.7 L1099.7,600.3 L1101.2,602.9 L1102.7,605.5 L1104.1,608.1 L1105.6,610.7 L1107.0,613.3 L1108.5,616.0 L1109.9,618.6 L1111.3,621.3 L1112.6,624.0 L1114.0,626.6 L1115.3,629.3 L1116.7,632.0 L1118.0,634.7 L1119.3,637.4 L1120.6,640.1 L1121.9,642.8 L1123.3,645.5 L1124.6,648.2 L1126.0,650.8 L1127.3,653.5 L1128.7,656.2 L1130.1,658.8 L1131.5,661.5 L1132.9,664.1 L1134.3,666.8 L1135.7,669.4 L1137.2,672.1 L1138.6,674.7 L1140.0,677.3 L1141.5,680.0 L1143.0,682.6 L1144.5,685.2 L1146.0,687.8 L1147.5,690.3 L1149.1,692.9 L1150.7,695.4 L1152.2,698.0 L1153.9,700.5 L1155.5,703.0 L1157.1,705.5 L1158.8,708.0 L1160.5,710.5 L1162.2,713.0 L1164.0,715.4 L1165.8,717.8 L1167.6,720.1 L1169.5,722.5 L1171.5,724.7 L1173.5,727.0 L1175.5,729.2 L1177.6,731.3 L1179.8,733.4 L1182.0,735.3 L1184.3,737.3 L1186.7,739.1 L1189.1,740.8 L1191.6,742.5 L1194.2,744.0 L1196.8,745.4 L1199.5,746.6 L1202.3,747.8 L1205.1,748.8 L1207.9,749.6 L1210.8,750.2 L1213.8,750.7 L1216.7,751.0 L1219.7,751.0 L1222.6,750.8 L1225.5,750.4 L1228.4,749.8 L1231.2,748.9 L1233.9,747.8 L1236.5,746.4 L1239.1,744.9 L1241.5,743.2 L1243.8,741.3 L1246.1,739.4 L1248.2,737.3 L1250.2,735.1 L1252.1,732.8 L1253.9,730.4 L1255.6,727.9 L1257.1,725.4 L1258.6,722.8 L1259.9,720.1 L1261.1,717.4 L1262.3,714.6 L1263.3,711.8 L1264.3,709.0 L1265.3,706.2 L1266.2,703.3 L1267.1,700.4 L1268.0,697.6 L1269.0,694.7 L1269.9,691.9 L1270.8,689.0 L1271.7,686.2 L1272.7,683.3 L1273.6,680.5 L1274.4,677.6 L1275.3,674.7 L1276.2,671.9 L1277.1,669.0 L1277.9,666.1 L1278.8,663.2 L1279.7,660.4 L1280.6,657.5 L1281.4,654.6 L1282.3,651.8 L1283.2,648.9 L1284.2,646.1 L1285.1,643.2 L1286.1,640.4 L1287.1,637.5 L1288.1,634.7 L1289.2,631.9 L1290.3,629.2 L1291.5,626.4 L1292.8,623.7 L1294.2,621.1 L1295.7,618.5 L1297.3,616.0 L1299.0,613.6 L1300.9,611.3 L1303.0,609.2 L1305.2,607.2 L1307.5,605.4 L1310.0,603.8 L1312.6,602.3 L1315.2,600.9 L1317.9,599.6 L1320.7,598.5 L1323.5,597.4 L1326.3,596.5 L1329.2,595.7 L1332.1,595.0 L1335.0,594.4 L1338.0,593.9 L1340.9,593.5 L1343.9,593.2 L1346.9,593.0 L1349.9,592.9 L1352.8,593.0 L1355.8,593.2 L1358.8,593.6 L1361.7,594.2 L1364.6,594.9 L1367.4,595.7 L1370.2,596.7 L1373.0,597.9 L1375.7,599.1 L1378.4,600.5 L1380.9,602.0 L1383.5,603.6 L1385.9,605.3 L1388.3,607.1 L1390.6,609.0 L1392.9,610.9 L1395.1,612.9 L1397.3,615.0 L1399.3,617.2 L1401.4,619.4 L1403.3,621.6 L1405.2,623.9 L1407.1,626.3 L1408.8,628.7 L1410.5,631.2 L1412.2,633.7 L1413.8,636.2 L1415.3,638.8 L1416.8,641.4 L1418.3,644.0 L1419.7,646.7 L1421.0,649.3 L1422.3,652.0 L1423.6,654.8 L1424.8,657.5 L1425.9,660.3 L1427.0,663.1 L1428.1,665.9 L1429.0,668.7 L1430.0,671.5 L1431.0,674.4 L1431.9,677.2 L1432.9,680.1 L1433.9,682.9 L1435.0,685.7 L1436.2,688.4 L1437.4,691.1 L1438.8,693.8 L1440.3,696.3 L1441.9,698.7 L1443.8,700.7 L1445.9,702.4 L1448.3,703.7 L1450.9,704.4 L1453.6,704.6 L1456.4,704.3 L1459.2,703.7 L1461.9,702.8 L1464.7,701.7 L1467.4,700.4 L1470.0,699.0 L1472.5,697.4 L1474.9,695.7 L1477.2,693.8 L1479.5,691.9 L1481.6,689.8 L1483.6,687.6 L1485.6,685.3 L1487.5,683.1 L1489.5,680.8 L1491.5,678.6 L1493.6,676.4 L1495.7,674.3 L1497.9,672.2 L1500.1,670.2 L1502.4,668.3 L1504.7,666.6 L1507.2,665.0 L1509.8,663.7 L1512.4,662.8 L1515.2,662.3 L1518.0,662.3 L1520.8,662.6 L1523.6,663.4 L1526.2,664.5 L1528.8,665.9 L1531.3,667.5 L1533.6,669.3 L1535.8,671.3 L1537.8,673.5 L1539.8,675.7 L1541.8,678.0 L1543.7,680.3 L1545.6,682.6 L1547.5,684.9 L1549.4,687.2 L1551.4,689.5 L1553.4,691.7 L1555.4,693.9 L1557.5,696.1 L1559.5,698.2 L1561.6,700.4 L1563.8,702.5 L1565.9,704.6 L1568.1,706.7 L1570.3,708.7 L1572.5,710.7 L1574.8,712.6 L1577.1,714.5 L1579.5,716.4 L1581.9,718.1 L1584.4,719.8 L1586.9,721.4 L1589.4,723.0 L1592.0,724.5 L1594.7,725.9 L1597.3,727.2 L1600.1,728.4 L1602.8,729.5 L1605.5,730.5 L1608.2,731.7 L1610.7,733.0 L1613.1,734.6 L1615.2,736.5 L1617.0,738.7 L1618.7,741.1 L1620.1,743.7 L1621.4,746.4 L1622.6,749.1 L1623.7,751.9 L1624.8,754.7 L1625.8,757.5 L1626.8,760.3 L1627.8,763.2 L1628.8,766.0 L1629.7,768.8 L1630.7,771.7 L1631.6,774.5 L1632.6,777.4 L1633.6,780.2 L1634.6,783.0 L1635.6,785.9 L1636.6,788.7 L1637.6,791.5 L1638.6,794.3 L1639.7,797.1 L1640.7,800.0 L1641.7,802.8 L1642.8,805.6 L1643.9,808.4 L1645.0,811.2 L1646.2,813.9 L1647.5,816.6 L1648.9,819.2 L1650.5,821.7 L1652.2,824.1 L1654.1,826.5 L1656.0,828.7 L1658.2,830.7 L1660.4,832.7 L1662.8,834.4 L1665.3,835.9 L1667.9,837.2 L1670.6,838.1 L1673.4,838.6 L1676.3,838.8 L1679.2,838.7 L1682.1,838.3 L1685.0,837.7 L1687.9,837.0 L1690.7,836.1 L1693.5,835.0 L1696.2,833.8 L1698.8,832.4 L1701.4,830.9 L1703.8,829.2 L1706.2,827.4 L1708.5,825.5 L1710.7,823.5 L1712.9,821.4 L1715.0,819.3 L1717.1,817.1 L1719.2,815.0 L1721.2,812.8 L1723.2,810.6 L1725.3,808.4 L1727.3,806.1 L1729.3,803.9 L1731.3,801.7 L1733.3,799.5 L1735.4,797.4 L1737.6,795.3 L1739.8,793.3 L1742.1,791.4 L1744.4,789.5 L1746.9,787.8 L1749.3,786.1 L1751.9,784.6 L1754.5,783.1 L1757.2,781.8 L1759.9,780.5 L1762.7,779.4 L1765.5,778.4 L1768.3,777.4 L1771.2,776.5 L1774.0,775.7 L1776.9,774.8 L1779.8,774.1 L1782.7,773.3 L1785.6,772.6 L1788.5,771.8 L1791.5,771.1 L1794.4,770.4 L1797.3,769.7 L1800.2,769.0 L1803.1,768.2 L1805.9,767.3 L1808.8,766.4 L1811.5,765.3 L1814.2,764.0 L1816.8,762.6 L1819.3,761.0 L1821.7,759.3 L1823.9,757.3 L1826.0,755.3 L1828.0,753.0 L1829.9,750.7 L1831.7,748.3 L1833.4,745.9 L1835.1,743.4 L1836.8,740.9 L1838.5,738.4 L1840.1,735.9 L1841.8,733.4 L1843.4,730.9 L1845.0,728.4 L1846.7,725.9 L1848.3,723.4 L1850.0,720.9 L1851.7,718.5 L1853.6,716.2 L1855.6,714.0 L1857.7,712.0 L1860.0,710.1 L1862.5,708.4 L1865.0,706.9 L1867.6,705.5 L1870.3,704.3 L1873.1,703.1 L1875.9,702.1 L1878.8,701.2 L1881.6,700.4 L1884.5,699.6 L1887.5,699.0 L1890.4,698.4 L1893.3,698.0 L1896.3,697.8 L1899.2,697.8 L1902.1,698.0 L1904.9,698.6 L1907.7,699.5 L1910.3,700.7 L1912.8,702.2 L1915.2,703.9 L1917.5,705.8 L1919.7,707.8 L1921.8,710.0 L1923.8,712.2 L1925.8,714.4 L1927.7,716.7 L1929.6,719.0 L1931.5,721.4 L1933.3,723.8 L1935.1,726.1 L1936.9,728.5 L1938.7,731.0 L1940.4,733.4 L1942.2,735.9 L1943.8,738.3 L1945.5,740.8 L1947.2,743.3 L1948.8,745.8 L1950.5,748.3 L1952.2,750.8 L1954.0,753.2 L1955.8,755.6 L1957.7,757.9 L1959.7,760.1 L1961.8,762.2 L1964.0,764.2 L1966.3,766.0 L1968.8,767.7 L1971.3,769.2 L1974.0,770.6 L1976.7,771.8 L1979.5,772.8 L1982.3,773.6 L1985.2,774.3 L1988.0,774.8 L1990.8,775.2 L1993.3,775.5 L1995.5,775.8 L2000.0,776.2 L2000.0,776.2 L2000.0,880 L714.4,880 Z" fill="url(#gy)"/><path d="M714.4,811.3 L718.8,810.5 L720.9,809.9 L723.4,809.3 L726.0,808.4 L728.7,807.3 L731.3,806.1 L733.9,804.6 L736.3,802.9 L738.7,801.1 L740.9,799.1 L743.1,797.1 L745.3,795.0 L747.3,792.9 L749.4,790.7 L751.4,788.4 L753.3,786.1 L755.2,783.8 L757.0,781.4 L758.8,779.0 L760.6,776.6 L762.4,774.2 L764.2,771.8 L765.9,769.4 L767.7,766.9 L769.5,764.5 L771.2,762.1 L773.0,759.7 L774.8,757.2 L776.5,754.8 L778.3,752.4 L780.1,750.0 L781.9,747.6 L783.7,745.2 L785.6,742.9 L787.5,740.6 L789.5,738.3 L791.6,736.2 L793.7,734.1 L795.9,732.1 L798.2,730.2 L800.6,728.4 L803.0,726.6 L805.5,725.0 L808.1,723.4 L810.7,722.0 L813.3,720.7 L816.1,719.5 L818.9,718.6 L821.7,717.8 L824.6,717.2 L827.6,716.8 L830.5,716.5 L833.5,716.2 L836.4,715.7 L839.2,715.0 L842.0,714.2 L844.8,713.0 L847.4,711.7 L850.0,710.2 L852.4,708.5 L854.8,706.7 L857.0,704.8 L859.2,702.8 L861.3,700.6 L863.3,698.4 L865.3,696.2 L867.2,693.8 L869.0,691.5 L870.8,689.0 L872.5,686.6 L874.2,684.1 L875.9,681.6 L877.5,679.1 L879.1,676.6 L880.6,674.0 L882.1,671.4 L883.6,668.8 L885.0,666.2 L886.5,663.5 L887.9,660.9 L889.3,658.2 L890.7,655.6 L892.1,652.9 L893.5,650.3 L894.9,647.6 L896.4,645.0 L897.9,642.4 L899.4,639.8 L900.9,637.2 L902.4,634.6 L903.9,632.0 L905.5,629.5 L907.0,626.9 L908.7,624.4 L910.4,622.0 L912.2,619.6 L914.1,617.3 L916.1,615.1 L918.2,613.0 L920.5,611.1 L922.9,609.3 L925.3,607.6 L927.9,606.1 L930.5,604.6 L933.1,603.3 L935.9,602.1 L938.6,601.0 L941.4,600.1 L944.3,599.3 L947.2,598.8 L950.1,598.4 L953.0,598.1 L955.9,597.7 L958.9,597.2 L961.8,596.6 L964.6,595.8 L967.5,594.9 L970.3,593.9 L973.0,592.8 L975.7,591.4 L978.2,589.9 L980.6,588.2 L982.9,586.4 L985.1,584.4 L987.2,582.3 L989.3,580.1 L991.3,577.9 L993.3,575.6 L995.2,573.3 L997.2,571.1 L999.1,568.8 L1001.0,566.5 L1003.0,564.2 L1004.9,561.9 L1006.8,559.6 L1008.7,557.2 L1010.6,554.9 L1012.6,552.6 L1014.5,550.4 L1016.4,548.1 L1018.4,545.8 L1020.4,543.5 L1022.3,541.2 L1024.3,539.0 L1026.2,536.7 L1028.2,534.4 L1030.1,532.2 L1032.1,529.9 L1034.2,527.7 L1036.2,525.6 L1038.4,523.5 L1040.6,521.6 L1043.0,519.8 L1045.5,518.3 L1048.1,517.1 L1050.8,516.2 L1053.6,515.7 L1056.5,515.5 L1059.5,515.5 L1062.4,515.7 L1065.4,516.1 L1068.3,516.5 L1071.3,517.0 L1074.2,517.7 L1077.0,518.6 L1079.7,519.6 L1082.4,520.9 L1084.9,522.4 L1087.3,524.1 L1089.7,526.0 L1091.9,528.0 L1094.0,530.0 L1096.1,532.2 L1098.0,534.5 L1099.9,536.8 L1101.6,539.2 L1103.3,541.7 L1104.8,544.3 L1106.3,546.9 L1107.7,549.5 L1109.1,552.2 L1110.4,554.9 L1111.7,557.6 L1112.9,560.3 L1114.2,563.0 L1115.5,565.7 L1116.8,568.4 L1118.1,571.1 L1119.4,573.8 L1120.8,576.5 L1122.1,579.2 L1123.4,581.9 L1124.8,584.6 L1126.1,587.3 L1127.5,589.9 L1128.9,592.6 L1130.4,595.2 L1131.9,597.8 L1133.4,600.3 L1135.0,602.9 L1136.7,605.4 L1138.4,607.8 L1140.2,610.2 L1142.0,612.6 L1143.9,614.9 L1145.8,617.2 L1147.8,619.5 L1149.7,621.8 L1151.7,624.0 L1153.7,626.3 L1155.8,628.4 L1157.9,630.6 L1160.0,632.7 L1162.2,634.8 L1164.4,636.7 L1166.7,638.6 L1169.1,640.4 L1171.6,641.9 L1174.2,643.2 L1176.9,644.2 L1179.7,644.9 L1182.6,645.3 L1185.5,645.5 L1188.5,645.4 L1191.4,645.1 L1194.4,644.6 L1197.3,644.1 L1200.2,643.3 L1203.1,642.5 L1205.9,641.5 L1208.7,640.4 L1211.4,639.3 L1214.1,638.0 L1216.8,636.7 L1219.4,635.2 L1222.0,633.7 L1224.6,632.2 L1227.1,630.6 L1229.7,629.0 L1232.2,627.4 L1234.7,625.8 L1237.3,624.2 L1239.8,622.6 L1242.4,621.0 L1245.0,619.5 L1247.5,618.0 L1250.2,616.5 L1252.8,615.1 L1255.4,613.7 L1258.1,612.4 L1260.9,611.1 L1263.6,610.0 L1266.4,609.0 L1269.3,608.2 L1272.2,607.4 L1275.1,606.8 L1278.0,606.3 L1281.0,606.0 L1284.0,605.8 L1286.9,605.8 L1289.9,606.0 L1292.9,606.3 L1295.8,606.7 L1298.7,607.3 L1301.6,608.1 L1304.5,608.9 L1307.4,609.8 L1310.2,610.8 L1312.9,612.0 L1315.5,613.3 L1318.1,614.8 L1320.5,616.5 L1322.7,618.4 L1324.7,620.5 L1326.6,622.8 L1328.4,625.2 L1330.0,627.7 L1331.6,630.3 L1333.0,632.9 L1334.5,635.5 L1335.8,638.2 L1337.2,640.9 L1338.5,643.6 L1339.7,646.3 L1341.0,649.0 L1342.2,651.8 L1343.4,654.5 L1344.5,657.3 L1345.6,660.1 L1346.7,662.8 L1347.8,665.6 L1348.9,668.4 L1350.0,671.2 L1351.0,674.1 L1352.0,676.9 L1353.1,679.7 L1354.1,682.5 L1355.1,685.3 L1356.1,688.2 L1357.1,691.0 L1358.0,693.8 L1359.0,696.7 L1359.9,699.5 L1360.9,702.4 L1361.8,705.2 L1362.7,708.1 L1363.6,711.0 L1364.5,713.8 L1365.4,716.7 L1366.3,719.5 L1367.2,722.4 L1368.2,725.2 L1369.2,728.1 L1370.2,730.9 L1371.2,733.7 L1372.3,736.5 L1373.4,739.3 L1374.6,742.1 L1375.7,744.8 L1376.9,747.6 L1378.1,750.3 L1379.4,753.1 L1380.7,755.8 L1382.0,758.5 L1383.3,761.1 L1384.7,763.8 L1386.1,766.4 L1387.6,769.0 L1389.2,771.6 L1390.8,774.1 L1392.5,776.6 L1394.3,779.0 L1396.2,781.2 L1398.2,783.4 L1400.4,785.4 L1402.7,787.2 L1405.1,788.8 L1407.7,790.1 L1410.5,791.2 L1413.3,792.0 L1416.2,792.5 L1419.1,792.9 L1422.1,793.0 L1425.0,793.0 L1428.0,792.8 L1431.0,792.5 L1434.0,792.1 L1436.9,791.6 L1439.8,791.0 L1442.7,790.3 L1445.6,789.4 L1448.4,788.5 L1451.2,787.4 L1454.0,786.3 L1456.7,785.0 L1459.4,783.8 L1462.1,782.4 L1464.8,781.1 L1467.5,779.8 L1470.2,778.5 L1472.9,777.2 L1475.6,776.0 L1478.4,774.7 L1481.1,773.5 L1483.9,772.4 L1486.6,771.2 L1489.4,770.0 L1492.2,768.9 L1495.0,767.8 L1497.8,766.7 L1500.6,765.7 L1503.4,764.7 L1506.3,763.9 L1509.2,763.1 L1512.1,762.5 L1515.0,761.9 L1518.0,761.5 L1521.0,761.2 L1523.9,761.1 L1526.9,761.1 L1529.9,761.1 L1532.9,761.3 L1535.9,761.6 L1538.9,761.9 L1541.8,762.4 L1544.8,762.9 L1547.7,763.5 L1550.6,764.1 L1553.5,764.9 L1556.4,765.7 L1559.3,766.6 L1562.1,767.5 L1564.9,768.5 L1567.7,769.6 L1570.5,770.8 L1573.2,772.0 L1575.9,773.3 L1578.6,774.6 L1581.2,776.1 L1583.8,777.6 L1586.3,779.2 L1588.8,780.9 L1591.3,782.5 L1593.8,784.2 L1596.3,785.9 L1598.8,787.4 L1601.4,789.0 L1604.0,790.5 L1606.6,791.9 L1609.3,793.2 L1612.0,794.5 L1614.8,795.6 L1617.6,796.6 L1620.4,797.6 L1623.3,798.4 L1626.2,799.1 L1629.1,799.6 L1632.1,800.1 L1635.1,800.5 L1638.0,800.7 L1641.0,800.8 L1644.0,800.9 L1647.0,800.8 L1650.0,800.6 L1653.0,800.3 L1656.0,800.0 L1658.9,799.6 L1661.9,799.1 L1664.8,798.5 L1667.7,797.8 L1670.6,797.1 L1673.5,796.3 L1676.3,795.3 L1679.1,794.3 L1681.9,793.1 L1684.5,791.8 L1687.1,790.3 L1689.5,788.6 L1691.9,786.8 L1694.1,784.8 L1696.2,782.7 L1698.3,780.6 L1700.3,778.4 L1702.3,776.1 L1704.3,773.9 L1706.2,771.6 L1708.1,769.3 L1710.0,767.0 L1711.9,764.6 L1713.9,762.3 L1715.8,760.1 L1717.8,757.8 L1719.9,755.7 L1722.0,753.6 L1724.3,751.7 L1726.6,749.8 L1729.0,748.1 L1731.5,746.5 L1734.1,745.0 L1736.8,743.7 L1739.5,742.4 L1742.3,741.3 L1745.1,740.3 L1747.9,739.4 L1750.8,738.6 L1753.7,737.8 L1756.6,737.1 L1759.6,736.4 L1762.5,735.7 L1765.4,735.1 L1768.3,734.4 L1771.2,733.7 L1774.1,732.9 L1777.0,732.2 L1779.9,731.4 L1782.8,730.5 L1785.6,729.6 L1788.4,728.5 L1791.1,727.3 L1793.8,726.0 L1796.4,724.6 L1799.0,723.0 L1801.4,721.3 L1803.8,719.5 L1806.2,717.7 L1808.4,715.7 L1810.5,713.6 L1812.6,711.5 L1814.6,709.2 L1816.6,707.0 L1818.5,704.6 L1820.3,702.3 L1822.2,699.9 L1824.0,697.6 L1825.9,695.2 L1827.7,692.9 L1829.6,690.5 L1831.4,688.1 L1833.2,685.7 L1835.1,683.4 L1837.0,681.1 L1839.0,678.9 L1841.1,676.7 L1843.2,674.7 L1845.5,672.8 L1848.0,671.1 L1850.5,669.5 L1853.1,668.1 L1855.8,666.8 L1858.5,665.6 L1861.3,664.5 L1864.1,663.6 L1867.0,662.7 L1869.9,661.9 L1872.8,661.3 L1875.7,660.8 L1878.7,660.4 L1881.6,660.2 L1884.6,660.1 L1887.6,660.2 L1890.5,660.6 L1893.4,661.1 L1896.3,661.8 L1899.2,662.6 L1902.0,663.6 L1904.8,664.7 L1907.5,666.0 L1910.1,667.4 L1912.7,668.9 L1915.2,670.5 L1917.6,672.2 L1920.0,674.1 L1922.2,676.0 L1924.5,678.0 L1926.7,680.0 L1928.8,682.1 L1931.0,684.2 L1933.1,686.3 L1935.3,688.4 L1937.4,690.5 L1939.5,692.6 L1941.6,694.8 L1943.7,696.9 L1945.8,699.1 L1947.9,701.2 L1950.0,703.3 L1952.2,705.4 L1954.4,707.4 L1956.6,709.4 L1958.9,711.3 L1961.3,713.2 L1963.6,715.1 L1966.0,716.8 L1968.5,718.5 L1971.0,720.1 L1973.6,721.6 L1976.3,722.9 L1979.0,724.0 L1981.8,724.9 L1984.7,725.7 L1987.5,726.3 L1990.2,726.7 L1992.8,727.0 L1995.0,727.2 L1999.5,727.6 L1999.5,727.6" fill="none" stroke="#6a3bbf" stroke-width="2.2"/><path d="M714.4,835.9 L718.5,837.7 L720.5,838.6 L722.9,839.6 L725.5,840.8 L728.2,841.9 L730.9,843.1 L733.7,844.2 L736.4,845.4 L739.2,846.6 L742.0,847.7 L744.7,848.9 L747.5,850.0 L750.3,851.1 L753.1,852.2 L755.9,853.2 L758.7,854.2 L761.6,855.1 L764.5,855.9 L767.4,856.6 L770.3,857.2 L773.2,857.6 L776.2,858.0 L779.2,858.2 L782.2,858.4 L785.2,858.4 L788.2,858.4 L791.2,858.3 L794.2,858.2 L797.1,857.9 L800.1,857.7 L803.1,857.3 L806.1,856.9 L809.0,856.4 L812.0,855.8 L814.9,855.2 L817.8,854.4 L820.7,853.6 L823.5,852.7 L826.3,851.7 L829.1,850.6 L831.8,849.4 L834.5,848.1 L837.1,846.7 L839.7,845.1 L842.3,843.6 L844.7,841.9 L847.1,840.1 L849.4,838.2 L851.5,836.1 L853.4,833.9 L855.2,831.6 L856.8,829.1 L858.2,826.4 L859.4,823.7 L860.6,821.0 L861.6,818.2 L862.5,815.3 L863.4,812.5 L864.2,809.6 L865.0,806.7 L865.7,803.8 L866.4,800.9 L867.1,798.0 L867.8,795.0 L868.5,792.1 L869.2,789.2 L869.9,786.3 L870.6,783.4 L871.3,780.4 L872.0,777.5 L872.8,774.6 L873.5,771.7 L874.3,768.8 L875.2,766.0 L876.2,763.2 L877.3,760.4 L878.6,757.8 L880.1,755.5 L881.9,753.4 L884.0,751.8 L886.3,750.6 L888.9,749.8 L891.7,749.3 L894.5,748.9 L897.4,748.4 L900.3,747.8 L903.1,747.1 L905.8,746.1 L908.4,744.8 L910.8,743.3 L913.0,741.5 L915.0,739.4 L916.6,737.0 L918.0,734.5 L919.2,731.8 L920.3,729.0 L921.2,726.2 L922.0,723.3 L922.7,720.4 L923.4,717.5 L924.1,714.5 L924.8,711.6 L925.4,708.7 L926.1,705.8 L926.8,702.8 L927.4,699.9 L928.2,697.0 L928.9,694.1 L929.7,691.2 L930.5,688.3 L931.3,685.4 L932.2,682.6 L933.0,679.7 L933.9,676.8 L934.8,674.0 L935.7,671.1 L936.7,668.3 L937.8,665.5 L939.0,662.8 L940.3,660.1 L941.7,657.5 L943.3,654.9 L945.0,652.5 L946.9,650.2 L948.9,648.1 L951.1,646.0 L953.3,644.0 L955.6,642.2 L958.1,640.4 L960.6,638.8 L963.1,637.3 L965.7,635.8 L968.4,634.6 L971.2,633.4 L974.0,632.4 L976.8,631.4 L979.6,630.4 L982.4,629.4 L985.1,628.2 L987.8,626.9 L990.4,625.4 L992.9,623.8 L995.3,622.1 L997.7,620.3 L1000.1,618.5 L1002.4,616.6 L1004.7,614.6 L1006.9,612.6 L1009.1,610.5 L1011.2,608.4 L1013.2,606.3 L1015.2,604.0 L1017.1,601.7 L1018.8,599.3 L1020.5,596.8 L1022.1,594.3 L1023.5,591.7 L1024.9,589.0 L1026.2,586.3 L1027.5,583.6 L1028.7,580.9 L1030.0,578.2 L1031.4,575.6 L1033.0,573.1 L1034.8,570.8 L1036.8,568.7 L1039.0,566.8 L1041.4,565.2 L1044.0,563.9 L1046.7,562.9 L1049.5,562.0 L1052.4,561.5 L1055.3,561.1 L1058.2,561.1 L1061.1,561.3 L1063.9,561.9 L1066.7,562.8 L1069.3,564.1 L1071.8,565.6 L1074.1,567.3 L1076.4,569.3 L1078.5,571.3 L1080.6,573.5 L1082.5,575.7 L1084.5,578.0 L1086.3,580.4 L1088.1,582.8 L1089.9,585.2 L1091.6,587.6 L1093.3,590.1 L1095.0,592.6 L1096.6,595.2 L1098.1,597.7 L1099.7,600.3 L1101.2,602.9 L1102.7,605.5 L1104.1,608.1 L1105.6,610.7 L1107.0,613.3 L1108.5,616.0 L1109.9,618.6 L1111.3,621.3 L1112.6,624.0 L1114.0,626.6 L1115.3,629.3 L1116.7,632.0 L1118.0,634.7 L1119.3,637.4 L1120.6,640.1 L1121.9,642.8 L1123.3,645.5 L1124.6,648.2 L1126.0,650.8 L1127.3,653.5 L1128.7,656.2 L1130.1,658.8 L1131.5,661.5 L1132.9,664.1 L1134.3,666.8 L1135.7,669.4 L1137.2,672.1 L1138.6,674.7 L1140.0,677.3 L1141.5,680.0 L1143.0,682.6 L1144.5,685.2 L1146.0,687.8 L1147.5,690.3 L1149.1,692.9 L1150.7,695.4 L1152.2,698.0 L1153.9,700.5 L1155.5,703.0 L1157.1,705.5 L1158.8,708.0 L1160.5,710.5 L1162.2,713.0 L1164.0,715.4 L1165.8,717.8 L1167.6,720.1 L1169.5,722.5 L1171.5,724.7 L1173.5,727.0 L1175.5,729.2 L1177.6,731.3 L1179.8,733.4 L1182.0,735.3 L1184.3,737.3 L1186.7,739.1 L1189.1,740.8 L1191.6,742.5 L1194.2,744.0 L1196.8,745.4 L1199.5,746.6 L1202.3,747.8 L1205.1,748.8 L1207.9,749.6 L1210.8,750.2 L1213.8,750.7 L1216.7,751.0 L1219.7,751.0 L1222.6,750.8 L1225.5,750.4 L1228.4,749.8 L1231.2,748.9 L1233.9,747.8 L1236.5,746.4 L1239.1,744.9 L1241.5,743.2 L1243.8,741.3 L1246.1,739.4 L1248.2,737.3 L1250.2,735.1 L1252.1,732.8 L1253.9,730.4 L1255.6,727.9 L1257.1,725.4 L1258.6,722.8 L1259.9,720.1 L1261.1,717.4 L1262.3,714.6 L1263.3,711.8 L1264.3,709.0 L1265.3,706.2 L1266.2,703.3 L1267.1,700.4 L1268.0,697.6 L1269.0,694.7 L1269.9,691.9 L1270.8,689.0 L1271.7,686.2 L1272.7,683.3 L1273.6,680.5 L1274.4,677.6 L1275.3,674.7 L1276.2,671.9 L1277.1,669.0 L1277.9,666.1 L1278.8,663.2 L1279.7,660.4 L1280.6,657.5 L1281.4,654.6 L1282.3,651.8 L1283.2,648.9 L1284.2,646.1 L1285.1,643.2 L1286.1,640.4 L1287.1,637.5 L1288.1,634.7 L1289.2,631.9 L1290.3,629.2 L1291.5,626.4 L1292.8,623.7 L1294.2,621.1 L1295.7,618.5 L1297.3,616.0 L1299.0,613.6 L1300.9,611.3 L1303.0,609.2 L1305.2,607.2 L1307.5,605.4 L1310.0,603.8 L1312.6,602.3 L1315.2,600.9 L1317.9,599.6 L1320.7,598.5 L1323.5,597.4 L1326.3,596.5 L1329.2,595.7 L1332.1,595.0 L1335.0,594.4 L1338.0,593.9 L1340.9,593.5 L1343.9,593.2 L1346.9,593.0 L1349.9,592.9 L1352.8,593.0 L1355.8,593.2 L1358.8,593.6 L1361.7,594.2 L1364.6,594.9 L1367.4,595.7 L1370.2,596.7 L1373.0,597.9 L1375.7,599.1 L1378.4,600.5 L1380.9,602.0 L1383.5,603.6 L1385.9,605.3 L1388.3,607.1 L1390.6,609.0 L1392.9,610.9 L1395.1,612.9 L1397.3,615.0 L1399.3,617.2 L1401.4,619.4 L1403.3,621.6 L1405.2,623.9 L1407.1,626.3 L1408.8,628.7 L1410.5,631.2 L1412.2,633.7 L1413.8,636.2 L1415.3,638.8 L1416.8,641.4 L1418.3,644.0 L1419.7,646.7 L1421.0,649.3 L1422.3,652.0 L1423.6,654.8 L1424.8,657.5 L1425.9,660.3 L1427.0,663.1 L1428.1,665.9 L1429.0,668.7 L1430.0,671.5 L1431.0,674.4 L1431.9,677.2 L1432.9,680.1 L1433.9,682.9 L1435.0,685.7 L1436.2,688.4 L1437.4,691.1 L1438.8,693.8 L1440.3,696.3 L1441.9,698.7 L1443.8,700.7 L1445.9,702.4 L1448.3,703.7 L1450.9,704.4 L1453.6,704.6 L1456.4,704.3 L1459.2,703.7 L1461.9,702.8 L1464.7,701.7 L1467.4,700.4 L1470.0,699.0 L1472.5,697.4 L1474.9,695.7 L1477.2,693.8 L1479.5,691.9 L1481.6,689.8 L1483.6,687.6 L1485.6,685.3 L1487.5,683.1 L1489.5,680.8 L1491.5,678.6 L1493.6,676.4 L1495.7,674.3 L1497.9,672.2 L1500.1,670.2 L1502.4,668.3 L1504.7,666.6 L1507.2,665.0 L1509.8,663.7 L1512.4,662.8 L1515.2,662.3 L1518.0,662.3 L1520.8,662.6 L1523.6,663.4 L1526.2,664.5 L1528.8,665.9 L1531.3,667.5 L1533.6,669.3 L1535.8,671.3 L1537.8,673.5 L1539.8,675.7 L1541.8,678.0 L1543.7,680.3 L1545.6,682.6 L1547.5,684.9 L1549.4,687.2 L1551.4,689.5 L1553.4,691.7 L1555.4,693.9 L1557.5,696.1 L1559.5,698.2 L1561.6,700.4 L1563.8,702.5 L1565.9,704.6 L1568.1,706.7 L1570.3,708.7 L1572.5,710.7 L1574.8,712.6 L1577.1,714.5 L1579.5,716.4 L1581.9,718.1 L1584.4,719.8 L1586.9,721.4 L1589.4,723.0 L1592.0,724.5 L1594.7,725.9 L1597.3,727.2 L1600.1,728.4 L1602.8,729.5 L1605.5,730.5 L1608.2,731.7 L1610.7,733.0 L1613.1,734.6 L1615.2,736.5 L1617.0,738.7 L1618.7,741.1 L1620.1,743.7 L1621.4,746.4 L1622.6,749.1 L1623.7,751.9 L1624.8,754.7 L1625.8,757.5 L1626.8,760.3 L1627.8,763.2 L1628.8,766.0 L1629.7,768.8 L1630.7,771.7 L1631.6,774.5 L1632.6,777.4 L1633.6,780.2 L1634.6,783.0 L1635.6,785.9 L1636.6,788.7 L1637.6,791.5 L1638.6,794.3 L1639.7,797.1 L1640.7,800.0 L1641.7,802.8 L1642.8,805.6 L1643.9,808.4 L1645.0,811.2 L1646.2,813.9 L1647.5,816.6 L1648.9,819.2 L1650.5,821.7 L1652.2,824.1 L1654.1,826.5 L1656.0,828.7 L1658.2,830.7 L1660.4,832.7 L1662.8,834.4 L1665.3,835.9 L1667.9,837.2 L1670.6,838.1 L1673.4,838.6 L1676.3,838.8 L1679.2,838.7 L1682.1,838.3 L1685.0,837.7 L1687.9,837.0 L1690.7,836.1 L1693.5,835.0 L1696.2,833.8 L1698.8,832.4 L1701.4,830.9 L1703.8,829.2 L1706.2,827.4 L1708.5,825.5 L1710.7,823.5 L1712.9,821.4 L1715.0,819.3 L1717.1,817.1 L1719.2,815.0 L1721.2,812.8 L1723.2,810.6 L1725.3,808.4 L1727.3,806.1 L1729.3,803.9 L1731.3,801.7 L1733.3,799.5 L1735.4,797.4 L1737.6,795.3 L1739.8,793.3 L1742.1,791.4 L1744.4,789.5 L1746.9,787.8 L1749.3,786.1 L1751.9,784.6 L1754.5,783.1 L1757.2,781.8 L1759.9,780.5 L1762.7,779.4 L1765.5,778.4 L1768.3,777.4 L1771.2,776.5 L1774.0,775.7 L1776.9,774.8 L1779.8,774.1 L1782.7,773.3 L1785.6,772.6 L1788.5,771.8 L1791.5,771.1 L1794.4,770.4 L1797.3,769.7 L1800.2,769.0 L1803.1,768.2 L1805.9,767.3 L1808.8,766.4 L1811.5,765.3 L1814.2,764.0 L1816.8,762.6 L1819.3,761.0 L1821.7,759.3 L1823.9,757.3 L1826.0,755.3 L1828.0,753.0 L1829.9,750.7 L1831.7,748.3 L1833.4,745.9 L1835.1,743.4 L1836.8,740.9 L1838.5,738.4 L1840.1,735.9 L1841.8,733.4 L1843.4,730.9 L1845.0,728.4 L1846.7,725.9 L1848.3,723.4 L1850.0,720.9 L1851.7,718.5 L1853.6,716.2 L1855.6,714.0 L1857.7,712.0 L1860.0,710.1 L1862.5,708.4 L1865.0,706.9 L1867.6,705.5 L1870.3,704.3 L1873.1,703.1 L1875.9,702.1 L1878.8,701.2 L1881.6,700.4 L1884.5,699.6 L1887.5,699.0 L1890.4,698.4 L1893.3,698.0 L1896.3,697.8 L1899.2,697.8 L1902.1,698.0 L1904.9,698.6 L1907.7,699.5 L1910.3,700.7 L1912.8,702.2 L1915.2,703.9 L1917.5,705.8 L1919.7,707.8 L1921.8,710.0 L1923.8,712.2 L1925.8,714.4 L1927.7,716.7 L1929.6,719.0 L1931.5,721.4 L1933.3,723.8 L1935.1,726.1 L1936.9,728.5 L1938.7,731.0 L1940.4,733.4 L1942.2,735.9 L1943.8,738.3 L1945.5,740.8 L1947.2,743.3 L1948.8,745.8 L1950.5,748.3 L1952.2,750.8 L1954.0,753.2 L1955.8,755.6 L1957.7,757.9 L1959.7,760.1 L1961.8,762.2 L1964.0,764.2 L1966.3,766.0 L1968.8,767.7 L1971.3,769.2 L1974.0,770.6 L1976.7,771.8 L1979.5,772.8 L1982.3,773.6 L1985.2,774.3 L1988.0,774.8 L1990.8,775.2 L1993.3,775.5 L1995.5,775.8 L2000.0,776.2 L2000.0,776.2" fill="none" stroke="#f9b416" stroke-width="2.2"/></svg><div class="ax" style="left:675.7px;width:120px;text-align:center;top:948px">01.01</div><div class="ax" style="left:767.3px;width:120px;text-align:center;top:948px">09.01</div><div class="ax" style="left:855.9px;width:120px;text-align:center;top:948px">17.01</div><div class="ax" style="left:945.6px;width:120px;text-align:center;top:948px">25.01</div><div class="ax" style="left:1041.4px;width:120px;text-align:center;top:948px">02.02</div><div class="ax" style="left:1137.8px;width:120px;text-align:center;top:948px">10.02</div><div class="ax" style="left:1231.2px;width:120px;text-align:center;top:948px">18.02</div><div class="ax" style="left:1326.7px;width:120px;text-align:center;top:948px">26.02</div><div class="ax" style="left:1425.2px;width:120px;text-align:center;top:948px">06.03</div><div class="ax" style="left:1521.6px;width:120px;text-align:center;top:948px">14.03</div><div class="ax" style="left:1617.1px;width:120px;text-align:center;top:948px">22.03</div><div class="ax" style="left:1714.7px;width:120px;text-align:center;top:948px">30.03</div><div class="ax" style="left:1810.8px;width:120px;text-align:center;top:948px">07.04</div><div class="ax" style="left:1906.3px;width:120px;text-align:center;top:948px">15.04</div><div class="card" style="left:2080px;top:342px;width:880px;height:677px"></div><div class="ttl" style="left:2120px;top:386px;letter-spacing:-0.8px">GTR</div><svg class="abs" style="left:2880px;top:385px" width="40" height="40"><circle cx="20" cy="20" r="16.3" fill="none" stroke="#7b8499" stroke-width="2.4"/><circle cx="20" cy="12.9" r="1.7" fill="#7b8499"/><line x1="20" y1="18.8" x2="20" y2="27.3" stroke="#7b8499" stroke-width="2.8" stroke-linecap="round"/></svg><svg class="abs" style="left:2329px;top:451px" width="380" height="380" viewBox="2329 451 380 380"><circle cx="2519" cy="641" r="167.5" fill="none" stroke="#e9ecf1" stroke-width="11"/><path d="M2513.50,794.90 A154,154 0 1 1 2581.52,500.26 L2564.85,534.45 A116,116 0 1 0 2513.50,756.87 Z" fill="#8c75ec" stroke="#8c75ec" stroke-width="2" stroke-linejoin="round"/><path d="M2513.9,756.9 L2512.3,794.9 M2503.9,756.0 L2498.9,793.7 M2493.9,754.3 L2485.7,791.3 M2484.1,751.6 L2472.7,787.9 M2474.6,748.2 L2460.1,783.3 M2465.4,743.9 L2447.9,777.6 M2456.7,738.8 L2436.3,770.9 M2448.4,733.0 L2425.3,763.2 M2440.6,726.5 L2415.0,754.5 M2433.5,719.4 L2405.5,745.0 M2427.0,711.6 L2396.8,734.7 M2421.2,703.3 L2389.1,723.7 M2416.1,694.6 L2382.4,712.1 M2411.8,685.4 L2376.7,699.9 M2408.4,675.9 L2372.1,687.3 M2405.7,666.1 L2368.7,674.3 M2404.0,656.1 L2366.3,661.1 M2403.1,646.1 L2365.1,647.7 M2403.1,635.9 L2365.1,634.3 M2404.0,625.9 L2366.3,620.9 M2405.7,615.9 L2368.7,607.7 M2408.4,606.1 L2372.1,594.7 M2411.8,596.6 L2376.7,582.1 M2416.1,587.4 L2382.4,569.9 M2421.2,578.7 L2389.1,558.3 M2427.0,570.4 L2396.8,547.3 M2433.5,562.6 L2405.5,537.0 M2440.6,555.5 L2415.0,527.5 M2448.4,549.0 L2425.3,518.8 M2456.7,543.2 L2436.3,511.1 M2465.4,538.1 L2447.9,504.4 M2474.6,533.8 L2460.1,498.7 M2484.1,530.4 L2472.7,494.1 M2493.9,527.7 L2485.7,490.7 M2503.9,526.0 L2498.9,488.3 M2513.9,525.1 L2512.3,487.1 M2524.1,525.1 L2525.7,487.1 M2534.1,526.0 L2539.1,488.3 M2544.1,527.7 L2552.3,490.7 M2553.9,530.4 L2565.3,494.1 M2563.4,533.8 L2577.9,498.7" stroke="rgba(0,0,0,0.09)" stroke-width="1"/><path d="M2591.41,505.09 A154,154 0 0 1 2524.50,794.90 L2524.50,756.87 A116,116 0 0 0 2574.74,539.27 Z" fill="#f6c650" stroke="#f6c650" stroke-width="2" stroke-linejoin="round"/><path d="M2574.4,539.1 L2592.5,505.7 M2583.0,544.3 L2604.0,512.6 M2591.2,550.2 L2614.9,520.5 M2598.8,556.9 L2625.0,529.3 M2605.9,564.1 L2634.3,539.0 M2612.2,572.0 L2642.8,549.4 M2617.9,580.4 L2650.3,560.5 M2622.8,589.2 L2656.8,572.3 M2626.9,598.5 L2662.3,584.6 M2630.2,608.1 L2666.7,597.3 M2632.7,617.9 L2669.9,610.3 M2634.3,627.9 L2672.0,623.6 M2635.0,638.0 L2672.9,637.0 M2634.8,648.1 L2672.7,650.4 M2633.7,658.1 L2671.3,663.8 M2631.8,668.1 L2668.7,677.0 M2629.0,677.8 L2665.0,689.9 M2625.4,687.3 L2660.2,702.4 M2620.9,696.4 L2654.3,714.5 M2615.7,705.0 L2647.4,726.0 M2609.8,713.2 L2639.5,736.9 M2603.1,720.8 L2630.7,747.0 M2595.9,727.9 L2621.0,756.3 M2588.0,734.2 L2610.6,764.8 M2579.6,739.9 L2599.5,772.3 M2570.8,744.8 L2587.7,778.8 M2561.5,748.9 L2575.4,784.3 M2551.9,752.2 L2562.7,788.7 M2542.1,754.7 L2549.7,791.9 M2532.1,756.3 L2536.4,794.0" stroke="rgba(0,0,0,0.09)" stroke-width="1"/></svg><div class="num" style="left:2419px;top:600px;width:200px;font-size:37px">35%</div><div class="lbl" style="left:2419px;top:654px;width:200px;font-size:25px">GTR</div><div class="abs" style="left:2329.0px;top:853.0px;width:28px;height:16px;border-radius:8px;background:#8c75ec;border:1.5px solid #7a60dc"></div><div class="abs" style="left:2663.0px;top:853.0px;width:28px;height:16px;border-radius:8px;background:#f6c650;border:1.5px solid #e6b23a"></div><div class="num" style="left:2193px;top:893px;width:300px">30321</div><div class="lbl" style="left:2193px;top:948px;width:300px">Показы</div><div class="num" style="left:2527px;top:893px;width:300px">25792</div><div class="lbl" style="left:2527px;top:948px;width:300px">Просмотры</div><div class="card" style="left:3000px;top:342px;width:780px;height:677px"></div><div class="ttl" style="left:3040px;top:386px">Среднее время просмотров</div><svg class="abs" style="left:3701px;top:385px" width="40" height="40"><circle cx="20" cy="20" r="16.3" fill="none" stroke="#7b8499" stroke-width="2.4"/><circle cx="20" cy="12.9" r="1.7" fill="#7b8499"/><line x1="20" y1="18.8" x2="20" y2="27.3" stroke="#7b8499" stroke-width="2.8" stroke-linecap="round"/></svg><div class="abs" style="left:3159px;top:626px;font-size:143px;line-height:160px;color:#2a2d34;white-space:nowrap;letter-spacing:0.5px">2.5 сек</div><div class="card" style="left:560px;top:1060px;width:1480px;height:677px"></div><div class="ttl" style="left:600px;top:1104px">Возраст</div><div class="ax" style="left:549px;width:120px;text-align:right;top:1187px;letter-spacing:2px">4000</div><div class="ax" style="left:549px;width:120px;text-align:right;top:1290.5px;letter-spacing:2px">3000</div><div class="ax" style="left:549px;width:120px;text-align:right;top:1394px;letter-spacing:2px">2000</div><div class="ax" style="left:549px;width:120px;text-align:right;top:1497.5px;letter-spacing:2px">1000</div><div class="ax" style="left:549px;width:120px;text-align:right;top:1601px;letter-spacing:2px">0</div><svg class="abs" style="left:0;top:0" width="2100" height="1800"><line x1="708" y1="1202" x2="2040" y2="1202" stroke="#d6dae3" stroke-width="2"/><line x1="708" y1="1305.5" x2="2040" y2="1305.5" stroke="#d6dae3" stroke-width="2"/><line x1="708" y1="1409" x2="2040" y2="1409" stroke="#d6dae3" stroke-width="2"/><line x1="708" y1="1512.5" x2="2040" y2="1512.5" stroke="#d6dae3" stroke-width="2"/><line x1="708" y1="1616" x2="2000" y2="1616" stroke="#d6dae3" stroke-width="2"/><path d="M708,1617 V1506 Q708,1501 713,1501 H818 Q823,1501 823,1506 V1617 Z" fill="#8f7aed"/><path d="M904,1617 V1467 Q904,1462 909,1462 H1014 Q1019,1462 1019,1467 V1617 Z" fill="#8f7aed"/><path d="M1100,1617 V1267 Q1100,1262 1105,1262 H1210 Q1215,1262 1215,1267 V1617 Z" fill="#8f7aed"/><path d="M1296,1617 V1347 Q1296,1342 1301,1342 H1406 Q1411,1342 1411,1347 V1617 Z" fill="#8f7aed"/><path d="M1492,1617 V1506 Q1492,1501 1497,1501 H1602 Q1607,1501 1607,1506 V1617 Z" fill="#8f7aed"/><path d="M1688,1617 V1546.5 Q1688,1541.5 1693,1541.5 H1798 Q1803,1541.5 1803,1546.5 V1617 Z" fill="#8f7aed"/><path d="M1884,1617 V1586.5 Q1884,1581.5 1889,1581.5 H1994 Q1999,1581.5 1999,1586.5 V1617 Z" fill="#8f7aed"/></svg><div class="ax" style="left:665.5px;width:200px;text-align:center;top:1638px">10 - 19</div><div class="ax" style="left:861.5px;width:200px;text-align:center;top:1638px">20 - 29</div><div class="ax" style="left:1057.5px;width:200px;text-align:center;top:1638px">30 - 39</div><div class="ax" style="left:1253.5px;width:200px;text-align:center;top:1638px">40 - 49</div><div class="ax" style="left:1449.5px;width:200px;text-align:center;top:1638px">50 - 59</div><div class="ax" style="left:1645.5px;width:200px;text-align:center;top:1638px">60 - 69</div><div class="ax" style="left:1841.5px;width:200px;text-align:center;top:1638px">70+</div><div class="card" style="left:2080px;top:1060px;width:880px;height:677px"></div><div class="ttl" style="left:2120px;top:1104px">Пол</div><svg class="abs" style="left:2330px;top:1168.6px" width="380" height="380" viewBox="2330 1168.6 380 380"><circle cx="2520" cy="1358.6" r="167.5" fill="none" stroke="#e9ecf1" stroke-width="11"/><path d="M2366.38,1347.73 A154,154 0 1 1 2642.25,1452.25 L2612.91,1428.06 A116,116 0 1 0 2404.39,1349.06 Z" fill="#4277f2" stroke="#4277f2" stroke-width="2" stroke-linejoin="round"/><path d="M2404.4,1349.5 L2366.5,1346.5 M2405.6,1339.5 L2368.1,1333.2 M2407.7,1329.6 L2370.9,1320.0 M2410.7,1319.9 L2374.8,1307.2 M2414.4,1310.5 L2379.9,1294.7 M2419.0,1301.5 L2386.0,1282.8 M2424.4,1292.9 L2393.1,1271.4 M2430.5,1284.8 L2401.2,1260.6 M2437.3,1277.3 L2410.2,1250.7 M2444.7,1270.4 L2420.0,1241.5 M2452.6,1264.2 L2430.6,1233.2 M2461.1,1258.7 L2441.8,1225.9 M2470.1,1253.9 L2453.7,1219.6 M2479.4,1249.9 L2466.1,1214.4 M2489.0,1246.8 L2478.8,1210.2 M2498.9,1244.5 L2491.9,1207.2 M2508.9,1243.1 L2505.2,1205.3 M2519.0,1242.6 L2518.7,1204.6 M2529.1,1243.0 L2532.1,1205.1 M2539.1,1244.2 L2545.4,1206.7 M2549.0,1246.3 L2558.6,1209.5 M2558.7,1249.3 L2571.4,1213.4 M2568.1,1253.0 L2583.9,1218.5 M2577.1,1257.6 L2595.8,1224.6 M2585.7,1263.0 L2607.2,1231.7 M2593.8,1269.1 L2618.0,1239.8 M2601.3,1275.9 L2627.9,1248.8 M2608.2,1283.3 L2637.1,1258.6 M2614.4,1291.2 L2645.4,1269.2 M2619.9,1299.7 L2652.7,1280.4 M2624.7,1308.7 L2659.0,1292.3 M2628.7,1318.0 L2664.2,1304.7 M2631.8,1327.6 L2668.4,1317.4 M2634.1,1337.5 L2671.4,1330.5 M2635.5,1347.5 L2673.3,1343.8 M2636.0,1357.6 L2674.0,1357.3 M2635.6,1367.7 L2673.5,1370.7 M2634.4,1377.7 L2671.9,1384.0 M2632.3,1387.6 L2669.1,1397.2 M2629.3,1397.3 L2665.2,1410.0 M2625.6,1406.7 L2660.1,1422.5 M2621.0,1415.7 L2654.0,1434.4 M2615.6,1424.3 L2646.9,1445.8" stroke="rgba(0,0,0,0.09)" stroke-width="1"/><path d="M2635.26,1460.74 A154,154 0 0 1 2366.00,1358.73 L2404.01,1360.05 A116,116 0 0 0 2605.91,1436.55 Z" fill="#f4707d" stroke="#f4707d" stroke-width="2" stroke-linejoin="round"/><path d="M2606.2,1436.2 L2634.4,1461.6 M2599.1,1443.4 L2625.0,1471.2 M2591.4,1450.0 L2614.8,1480.0 M2583.2,1455.9 L2603.9,1487.8 M2574.5,1461.0 L2592.3,1494.6 M2565.3,1465.4 L2580.2,1500.4 M2555.8,1468.9 L2567.6,1505.1 M2546.1,1471.6 L2554.6,1508.7 M2536.1,1473.5 L2541.4,1511.1 M2526.1,1474.4 L2528.1,1512.4 M2516.0,1474.5 L2514.6,1512.5 M2505.9,1473.7 L2501.2,1511.5 M2495.9,1472.1 L2488.0,1509.2 M2486.1,1469.5 L2475.0,1505.9 M2476.5,1466.2 L2462.3,1501.4 M2467.3,1462.0 L2450.1,1495.8 M2458.5,1457.0 L2438.4,1489.2 M2450.2,1451.2 L2427.3,1481.6 M2442.4,1444.8 L2417.0,1473.0 M2435.2,1437.7 L2407.4,1463.6 M2428.6,1430.0 L2398.6,1453.4 M2422.7,1421.8 L2390.8,1442.5 M2417.6,1413.1 L2384.0,1430.9 M2413.2,1403.9 L2378.2,1418.8 M2409.7,1394.4 L2373.5,1406.2 M2407.0,1384.7 L2369.9,1393.2 M2405.1,1374.7 L2367.5,1380.0 M2404.2,1364.7 L2366.2,1366.7" stroke="rgba(0,0,0,0.09)" stroke-width="1"/></svg><div class="abs" style="left:2335.0px;top:1572.0px;width:28px;height:16px;border-radius:8px;background:#4277f2;border:1.5px solid #3462d8"></div><div class="abs" style="left:2675.0px;top:1572.0px;width:28px;height:16px;border-radius:8px;background:#f4707d;border:1.5px solid #de5a68"></div><div class="num" style="left:2199px;top:1612px;width:300px">26882</div><div class="lbl" style="left:2199px;top:1667px;width:300px">Мужчины</div><div class="num" style="left:2539px;top:1612px;width:300px">20387</div><div class="lbl" style="left:2539px;top:1667px;width:300px">Женщины</div><div class="card" style="left:560px;top:1778px;width:1480px;height:559px"></div><div class="ttl" style="left:600px;top:1822px">Пиковое время просмотров</div><svg class="abs" style="left:1961px;top:1821px" width="40" height="40"><circle cx="20" cy="20" r="16.3" fill="none" stroke="#7b8499" stroke-width="2.4"/><circle cx="20" cy="12.9" r="1.7" fill="#7b8499"/><line x1="20" y1="18.8" x2="20" y2="27.3" stroke="#7b8499" stroke-width="2.8" stroke-linecap="round"/></svg><div class="ax" style="left:559px;width:120px;text-align:right;top:1904px;letter-spacing:2px">4000</div><div class="ax" style="left:559px;width:120px;text-align:right;top:1983px;letter-spacing:2px">3000</div><div class="ax" style="left:559px;width:120px;text-align:right;top:2062px;letter-spacing:2px">2000</div><div class="ax" style="left:559px;width:120px;text-align:right;top:2141px;letter-spacing:2px">1000</div><div class="ax" style="left:559px;width:120px;text-align:right;top:2220px;letter-spacing:2px">0</div><svg class="abs" style="left:0;top:0" width="2100" height="2342"><defs><linearGradient id="gb" x1="0" y1="0" x2="0" y2="1"><stop offset="0" stop-color="#4a72e8" stop-opacity="0.08"/><stop offset="1" stop-color="#4a72e8" stop-opacity="0"/></linearGradient></defs><line x1="718" y1="1919" x2="2040" y2="1919" stroke="#d6dae3" stroke-width="2"/><line x1="718" y1="1998" x2="2040" y2="1998" stroke="#d6dae3" stroke-width="2"/><line x1="718" y1="2077" x2="2040" y2="2077" stroke="#d6dae3" stroke-width="2"/><line x1="714" y1="2156" x2="2040" y2="2156" stroke="#d6dae3" stroke-width="2"/><line x1="714" y1="2235" x2="1999" y2="2235" stroke="#d6dae3" stroke-width="2"/><path d="M713.9,2129.8 L718.4,2129.2 L720.6,2128.9 L723.1,2128.4 L725.8,2127.8 L728.6,2127.0 L731.4,2126.1 L734.1,2125.0 L736.8,2123.7 L739.5,2122.3 L742.1,2120.8 L744.6,2119.2 L747.1,2117.5 L749.5,2115.8 L751.8,2113.9 L754.1,2112.0 L756.3,2110.0 L758.4,2107.9 L760.5,2105.7 L762.5,2103.5 L764.5,2101.3 L766.5,2099.1 L768.6,2096.9 L770.7,2094.7 L772.8,2092.6 L775.0,2090.5 L777.2,2088.5 L779.4,2086.5 L781.6,2084.5 L783.9,2082.6 L786.3,2080.7 L788.7,2078.9 L791.1,2077.2 L793.6,2075.5 L796.1,2073.9 L798.7,2072.5 L801.4,2071.1 L804.1,2069.8 L806.8,2068.6 L809.6,2067.5 L812.4,2066.6 L815.3,2065.7 L818.2,2065.0 L821.1,2064.5 L824.1,2064.1 L827.0,2063.7 L830.0,2063.5 L833.0,2063.2 L836.0,2062.9 L838.9,2062.5 L841.8,2062.0 L844.7,2061.2 L847.4,2060.3 L850.1,2059.1 L852.8,2057.7 L855.3,2056.2 L857.8,2054.5 L860.2,2052.8 L862.6,2051.0 L864.9,2049.1 L867.2,2047.1 L869.4,2045.1 L871.6,2043.0 L873.7,2040.9 L875.8,2038.8 L877.8,2036.5 L879.8,2034.3 L881.7,2032.0 L883.6,2029.7 L885.5,2027.3 L887.3,2025.0 L889.2,2022.6 L891.0,2020.2 L892.8,2017.9 L894.7,2015.5 L896.5,2013.1 L898.3,2010.7 L900.2,2008.3 L902.0,2006.0 L903.9,2003.7 L905.9,2001.4 L907.9,1999.3 L910.1,1997.2 L912.3,1995.1 L914.6,1993.2 L916.9,1991.4 L919.3,1989.7 L921.9,1988.1 L924.4,1986.6 L927.1,1985.3 L929.8,1984.1 L932.6,1983.2 L935.5,1982.4 L938.4,1981.7 L941.4,1981.2 L944.3,1980.9 L947.3,1980.6 L950.3,1980.3 L953.3,1980.1 L956.2,1979.9 L959.2,1979.5 L962.1,1979.1 L965.0,1978.4 L967.9,1977.6 L970.7,1976.7 L973.5,1975.6 L976.2,1974.4 L978.9,1973.1 L981.5,1971.6 L984.0,1970.0 L986.4,1968.3 L988.8,1966.5 L991.1,1964.6 L993.4,1962.7 L995.7,1960.7 L997.9,1958.7 L1000.2,1956.7 L1002.4,1954.7 L1004.6,1952.8 L1006.9,1950.8 L1009.2,1948.8 L1011.4,1946.8 L1013.7,1944.9 L1016.0,1943.0 L1018.3,1941.1 L1020.7,1939.2 L1023.0,1937.3 L1025.4,1935.5 L1027.8,1933.7 L1030.2,1931.9 L1032.7,1930.3 L1035.2,1928.7 L1037.8,1927.2 L1040.5,1926.0 L1043.2,1924.9 L1046.1,1924.0 L1048.9,1923.3 L1051.9,1922.8 L1054.8,1922.5 L1057.8,1922.3 L1060.8,1922.2 L1063.8,1922.3 L1066.8,1922.4 L1069.7,1922.7 L1072.7,1923.2 L1075.6,1923.7 L1078.5,1924.5 L1081.3,1925.3 L1084.1,1926.4 L1086.8,1927.6 L1089.5,1929.0 L1092.0,1930.5 L1094.5,1932.1 L1096.9,1933.9 L1099.3,1935.7 L1101.5,1937.7 L1103.6,1939.8 L1105.7,1942.0 L1107.6,1944.2 L1109.5,1946.5 L1111.4,1948.9 L1113.2,1951.3 L1115.0,1953.7 L1116.8,1956.1 L1118.5,1958.5 L1120.3,1960.9 L1122.1,1963.4 L1123.9,1965.8 L1125.6,1968.2 L1127.4,1970.6 L1129.1,1973.1 L1130.9,1975.5 L1132.7,1977.9 L1134.6,1980.2 L1136.4,1982.6 L1138.3,1984.9 L1140.2,1987.2 L1142.2,1989.5 L1144.2,1991.7 L1146.2,1993.9 L1148.3,1996.1 L1150.4,1998.2 L1152.6,2000.2 L1154.9,2002.1 L1157.3,2003.9 L1159.7,2005.5 L1162.3,2007.0 L1165.0,2008.3 L1167.7,2009.5 L1170.5,2010.5 L1173.4,2011.4 L1176.3,2012.1 L1179.2,2012.7 L1182.1,2013.1 L1185.1,2013.3 L1188.0,2013.4 L1191.0,2013.3 L1194.0,2013.1 L1197.0,2012.7 L1199.9,2012.2 L1202.8,2011.6 L1205.8,2011.0 L1208.7,2010.2 L1211.5,2009.4 L1214.4,2008.5 L1217.2,2007.5 L1220.1,2006.5 L1222.9,2005.5 L1225.7,2004.4 L1228.5,2003.3 L1231.3,2002.2 L1234.0,2001.1 L1236.8,2000.0 L1239.6,1998.9 L1242.4,1997.7 L1245.2,1996.6 L1247.9,1995.4 L1250.7,1994.3 L1253.5,1993.2 L1256.3,1992.1 L1259.1,1991.1 L1261.9,1990.1 L1264.8,1989.2 L1267.7,1988.4 L1270.6,1987.7 L1273.5,1987.0 L1276.4,1986.4 L1279.4,1986.0 L1282.4,1985.7 L1285.3,1985.5 L1288.3,1985.4 L1291.3,1985.5 L1294.3,1985.7 L1297.3,1986.0 L1300.2,1986.4 L1303.2,1986.9 L1306.1,1987.5 L1308.9,1988.3 L1311.8,1989.3 L1314.5,1990.4 L1317.1,1991.7 L1319.6,1993.2 L1322.0,1995.0 L1324.3,1996.9 L1326.4,1998.9 L1328.5,2001.1 L1330.4,2003.4 L1332.3,2005.7 L1334.2,2008.0 L1335.9,2010.5 L1337.7,2012.9 L1339.4,2015.4 L1341.0,2017.9 L1342.6,2020.4 L1344.2,2022.9 L1345.8,2025.5 L1347.3,2028.1 L1348.8,2030.7 L1350.2,2033.3 L1351.6,2036.0 L1352.9,2038.7 L1354.2,2041.4 L1355.5,2044.1 L1356.7,2046.8 L1357.9,2049.6 L1359.0,2052.4 L1360.1,2055.2 L1361.3,2057.9 L1362.4,2060.7 L1363.5,2063.5 L1364.6,2066.3 L1365.8,2069.0 L1367.0,2071.8 L1368.2,2074.6 L1369.4,2077.3 L1370.6,2080.0 L1371.8,2082.8 L1373.1,2085.5 L1374.5,2088.2 L1375.9,2090.8 L1377.4,2093.3 L1379.0,2095.8 L1380.8,2098.2 L1382.7,2100.5 L1384.8,2102.6 L1387.0,2104.7 L1389.2,2106.5 L1391.6,2108.3 L1394.2,2109.9 L1396.7,2111.4 L1399.4,2112.7 L1402.1,2113.8 L1404.9,2114.8 L1407.8,2115.6 L1410.7,2116.2 L1413.6,2116.7 L1416.6,2117.0 L1419.6,2117.1 L1422.6,2117.1 L1425.5,2116.9 L1428.5,2116.6 L1431.5,2116.2 L1434.4,2115.7 L1437.4,2115.1 L1440.3,2114.5 L1443.2,2113.8 L1446.1,2113.1 L1449.0,2112.3 L1451.9,2111.5 L1454.8,2110.7 L1457.6,2109.8 L1460.5,2108.9 L1463.3,2107.9 L1466.2,2107.0 L1469.0,2106.1 L1471.9,2105.1 L1474.8,2104.2 L1477.6,2103.4 L1480.5,2102.5 L1483.4,2101.7 L1486.3,2100.9 L1489.2,2100.1 L1492.1,2099.3 L1495.0,2098.5 L1497.9,2097.8 L1500.8,2097.1 L1503.7,2096.4 L1506.7,2095.8 L1509.6,2095.3 L1512.6,2094.8 L1515.5,2094.4 L1518.5,2094.0 L1521.5,2093.8 L1524.5,2093.7 L1527.5,2093.7 L1530.4,2093.7 L1533.4,2093.9 L1536.4,2094.1 L1539.4,2094.4 L1542.4,2094.7 L1545.4,2095.1 L1548.3,2095.5 L1551.3,2096.1 L1554.2,2096.6 L1557.1,2097.3 L1560.0,2098.0 L1562.9,2098.8 L1565.8,2099.7 L1568.6,2100.7 L1571.4,2101.7 L1574.3,2102.7 L1577.0,2103.8 L1579.8,2104.9 L1582.6,2106.1 L1585.4,2107.3 L1588.1,2108.5 L1590.8,2109.7 L1593.5,2111.0 L1596.3,2112.3 L1599.0,2113.5 L1601.7,2114.7 L1604.5,2115.9 L1607.3,2116.9 L1610.1,2117.8 L1613.0,2118.7 L1615.9,2119.4 L1618.8,2120.0 L1621.8,2120.5 L1624.7,2121.0 L1627.7,2121.4 L1630.7,2121.7 L1633.6,2122.0 L1636.6,2122.2 L1639.6,2122.2 L1642.6,2122.3 L1645.6,2122.3 L1648.6,2122.2 L1651.6,2122.1 L1654.6,2122.0 L1657.6,2121.8 L1660.6,2121.5 L1663.6,2121.2 L1666.5,2120.7 L1669.5,2120.2 L1672.4,2119.6 L1675.3,2118.8 L1678.1,2118.0 L1681.0,2117.0 L1683.7,2115.9 L1686.4,2114.7 L1689.1,2113.3 L1691.6,2111.8 L1694.1,2110.1 L1696.5,2108.4 L1698.9,2106.6 L1701.3,2104.7 L1703.6,2102.8 L1705.9,2100.9 L1708.2,2099.0 L1710.5,2097.1 L1712.8,2095.2 L1715.2,2093.3 L1717.6,2091.5 L1720.0,2089.9 L1722.6,2088.3 L1725.2,2086.9 L1727.9,2085.5 L1730.6,2084.3 L1733.4,2083.2 L1736.2,2082.2 L1739.1,2081.3 L1741.9,2080.5 L1744.8,2079.8 L1747.7,2079.1 L1750.7,2078.6 L1753.6,2078.1 L1756.6,2077.7 L1759.6,2077.3 L1762.6,2077.0 L1765.5,2076.6 L1768.5,2076.2 L1771.4,2075.7 L1774.4,2075.1 L1777.3,2074.4 L1780.2,2073.6 L1783.0,2072.7 L1785.9,2071.8 L1788.7,2070.8 L1791.5,2069.8 L1794.3,2068.7 L1797.1,2067.5 L1799.8,2066.3 L1802.5,2064.9 L1805.1,2063.5 L1807.6,2062.0 L1810.1,2060.3 L1812.5,2058.5 L1814.9,2056.7 L1817.1,2054.7 L1819.3,2052.7 L1821.4,2050.6 L1823.5,2048.4 L1825.6,2046.2 L1827.6,2044.1 L1829.7,2041.9 L1831.9,2039.8 L1834.1,2037.9 L1836.4,2036.0 L1838.8,2034.2 L1841.3,2032.6 L1843.9,2031.2 L1846.6,2029.9 L1849.3,2028.8 L1852.1,2027.7 L1855.0,2026.8 L1857.9,2025.9 L1860.7,2025.1 L1863.7,2024.5 L1866.6,2023.9 L1869.5,2023.3 L1872.5,2023.0 L1875.5,2022.7 L1878.4,2022.6 L1881.4,2022.6 L1884.4,2022.8 L1887.4,2023.1 L1890.3,2023.5 L1893.3,2023.9 L1896.2,2024.5 L1899.1,2025.2 L1902.0,2026.0 L1904.9,2026.9 L1907.7,2027.8 L1910.5,2028.9 L1913.2,2030.2 L1915.9,2031.5 L1918.5,2032.9 L1921.1,2034.4 L1923.6,2036.0 L1926.2,2037.6 L1928.7,2039.3 L1931.2,2041.0 L1933.6,2042.6 L1936.1,2044.3 L1938.6,2046.0 L1941.0,2047.7 L1943.5,2049.5 L1946.0,2051.2 L1948.4,2052.9 L1950.9,2054.5 L1953.4,2056.2 L1956.0,2057.8 L1958.6,2059.3 L1961.2,2060.7 L1963.8,2062.1 L1966.5,2063.5 L1969.2,2064.7 L1972.0,2065.9 L1974.8,2066.9 L1977.6,2067.8 L1980.5,2068.5 L1983.4,2069.1 L1986.3,2069.6 L1989.0,2070.0 L1991.6,2070.3 L1993.8,2070.5 L1998.3,2070.9 L1998.3,2070.9 L1998.3,2175 L713.9,2175 Z" fill="url(#gb)"/><path d="M713.9,2129.8 L718.4,2129.2 L720.6,2128.9 L723.1,2128.4 L725.8,2127.8 L728.6,2127.0 L731.4,2126.1 L734.1,2125.0 L736.8,2123.7 L739.5,2122.3 L742.1,2120.8 L744.6,2119.2 L747.1,2117.5 L749.5,2115.8 L751.8,2113.9 L754.1,2112.0 L756.3,2110.0 L758.4,2107.9 L760.5,2105.7 L762.5,2103.5 L764.5,2101.3 L766.5,2099.1 L768.6,2096.9 L770.7,2094.7 L772.8,2092.6 L775.0,2090.5 L777.2,2088.5 L779.4,2086.5 L781.6,2084.5 L783.9,2082.6 L786.3,2080.7 L788.7,2078.9 L791.1,2077.2 L793.6,2075.5 L796.1,2073.9 L798.7,2072.5 L801.4,2071.1 L804.1,2069.8 L806.8,2068.6 L809.6,2067.5 L812.4,2066.6 L815.3,2065.7 L818.2,2065.0 L821.1,2064.5 L824.1,2064.1 L827.0,2063.7 L830.0,2063.5 L833.0,2063.2 L836.0,2062.9 L838.9,2062.5 L841.8,2062.0 L844.7,2061.2 L847.4,2060.3 L850.1,2059.1 L852.8,2057.7 L855.3,2056.2 L857.8,2054.5 L860.2,2052.8 L862.6,2051.0 L864.9,2049.1 L867.2,2047.1 L869.4,2045.1 L871.6,2043.0 L873.7,2040.9 L875.8,2038.8 L877.8,2036.5 L879.8,2034.3 L881.7,2032.0 L883.6,2029.7 L885.5,2027.3 L887.3,2025.0 L889.2,2022.6 L891.0,2020.2 L892.8,2017.9 L894.7,2015.5 L896.5,2013.1 L898.3,2010.7 L900.2,2008.3 L902.0,2006.0 L903.9,2003.7 L905.9,2001.4 L907.9,1999.3 L910.1,1997.2 L912.3,1995.1 L914.6,1993.2 L916.9,1991.4 L919.3,1989.7 L921.9,1988.1 L924.4,1986.6 L927.1,1985.3 L929.8,1984.1 L932.6,1983.2 L935.5,1982.4 L938.4,1981.7 L941.4,1981.2 L944.3,1980.9 L947.3,1980.6 L950.3,1980.3 L953.3,1980.1 L956.2,1979.9 L959.2,1979.5 L962.1,1979.1 L965.0,1978.4 L967.9,1977.6 L970.7,1976.7 L973.5,1975.6 L976.2,1974.4 L978.9,1973.1 L981.5,1971.6 L984.0,1970.0 L986.4,1968.3 L988.8,1966.5 L991.1,1964.6 L993.4,1962.7 L995.7,1960.7 L997.9,1958.7 L1000.2,1956.7 L1002.4,1954.7 L1004.6,1952.8 L1006.9,1950.8 L1009.2,1948.8 L1011.4,1946.8 L1013.7,1944.9 L1016.0,1943.0 L1018.3,1941.1 L1020.7,1939.2 L1023.0,1937.3 L1025.4,1935.5 L1027.8,1933.7 L1030.2,1931.9 L1032.7,1930.3 L1035.2,1928.7 L1037.8,1927.2 L1040.5,1926.0 L1043.2,1924.9 L1046.1,1924.0 L1048.9,1923.3 L1051.9,1922.8 L1054.8,1922.5 L1057.8,1922.3 L1060.8,1922.2 L1063.8,1922.3 L1066.8,1922.4 L1069.7,1922.7 L1072.7,1923.2 L1075.6,1923.7 L1078.5,1924.5 L1081.3,1925.3 L1084.1,1926.4 L1086.8,1927.6 L1089.5,1929.0 L1092.0,1930.5 L1094.5,1932.1 L1096.9,1933.9 L1099.3,1935.7 L1101.5,1937.7 L1103.6,1939.8 L1105.7,1942.0 L1107.6,1944.2 L1109.5,1946.5 L1111.4,1948.9 L1113.2,1951.3 L1115.0,1953.7 L1116.8,1956.1 L1118.5,1958.5 L1120.3,1960.9 L1122.1,1963.4 L1123.9,1965.8 L1125.6,1968.2 L1127.4,1970.6 L1129.1,1973.1 L1130.9,1975.5 L1132.7,1977.9 L1134.6,1980.2 L1136.4,1982.6 L1138.3,1984.9 L1140.2,1987.2 L1142.2,1989.5 L1144.2,1991.7 L1146.2,1993.9 L1148.3,1996.1 L1150.4,1998.2 L1152.6,2000.2 L1154.9,2002.1 L1157.3,2003.9 L1159.7,2005.5 L1162.3,2007.0 L1165.0,2008.3 L1167.7,2009.5 L1170.5,2010.5 L1173.4,2011.4 L1176.3,2012.1 L1179.2,2012.7 L1182.1,2013.1 L1185.1,2013.3 L1188.0,2013.4 L1191.0,2013.3 L1194.0,2013.1 L1197.0,2012.7 L1199.9,2012.2 L1202.8,2011.6 L1205.8,2011.0 L1208.7,2010.2 L1211.5,2009.4 L1214.4,2008.5 L1217.2,2007.5 L1220.1,2006.5 L1222.9,2005.5 L1225.7,2004.4 L1228.5,2003.3 L1231.3,2002.2 L1234.0,2001.1 L1236.8,2000.0 L1239.6,1998.9 L1242.4,1997.7 L1245.2,1996.6 L1247.9,1995.4 L1250.7,1994.3 L1253.5,1993.2 L1256.3,1992.1 L1259.1,1991.1 L1261.9,1990.1 L1264.8,1989.2 L1267.7,1988.4 L1270.6,1987.7 L1273.5,1987.0 L1276.4,1986.4 L1279.4,1986.0 L1282.4,1985.7 L1285.3,1985.5 L1288.3,1985.4 L1291.3,1985.5 L1294.3,1985.7 L1297.3,1986.0 L1300.2,1986.4 L1303.2,1986.9 L1306.1,1987.5 L1308.9,1988.3 L1311.8,1989.3 L1314.5,1990.4 L1317.1,1991.7 L1319.6,1993.2 L1322.0,1995.0 L1324.3,1996.9 L1326.4,1998.9 L1328.5,2001.1 L1330.4,2003.4 L1332.3,2005.7 L1334.2,2008.0 L1335.9,2010.5 L1337.7,2012.9 L1339.4,2015.4 L1341.0,2017.9 L1342.6,2020.4 L1344.2,2022.9 L1345.8,2025.5 L1347.3,2028.1 L1348.8,2030.7 L1350.2,2033.3 L1351.6,2036.0 L1352.9,2038.7 L1354.2,2041.4 L1355.5,2044.1 L1356.7,2046.8 L1357.9,2049.6 L1359.0,2052.4 L1360.1,2055.2 L1361.3,2057.9 L1362.4,2060.7 L1363.5,2063.5 L1364.6,2066.3 L1365.8,2069.0 L1367.0,2071.8 L1368.2,2074.6 L1369.4,2077.3 L1370.6,2080.0 L1371.8,2082.8 L1373.1,2085.5 L1374.5,2088.2 L1375.9,2090.8 L1377.4,2093.3 L1379.0,2095.8 L1380.8,2098.2 L1382.7,2100.5 L1384.8,2102.6 L1387.0,2104.7 L1389.2,2106.5 L1391.6,2108.3 L1394.2,2109.9 L1396.7,2111.4 L1399.4,2112.7 L1402.1,2113.8 L1404.9,2114.8 L1407.8,2115.6 L1410.7,2116.2 L1413.6,2116.7 L1416.6,2117.0 L1419.6,2117.1 L1422.6,2117.1 L1425.5,2116.9 L1428.5,2116.6 L1431.5,2116.2 L1434.4,2115.7 L1437.4,2115.1 L1440.3,2114.5 L1443.2,2113.8 L1446.1,2113.1 L1449.0,2112.3 L1451.9,2111.5 L1454.8,2110.7 L1457.6,2109.8 L1460.5,2108.9 L1463.3,2107.9 L1466.2,2107.0 L1469.0,2106.1 L1471.9,2105.1 L1474.8,2104.2 L1477.6,2103.4 L1480.5,2102.5 L1483.4,2101.7 L1486.3,2100.9 L1489.2,2100.1 L1492.1,2099.3 L1495.0,2098.5 L1497.9,2097.8 L1500.8,2097.1 L1503.7,2096.4 L1506.7,2095.8 L1509.6,2095.3 L1512.6,2094.8 L1515.5,2094.4 L1518.5,2094.0 L1521.5,2093.8 L1524.5,2093.7 L1527.5,2093.7 L1530.4,2093.7 L1533.4,2093.9 L1536.4,2094.1 L1539.4,2094.4 L1542.4,2094.7 L1545.4,2095.1 L1548.3,2095.5 L1551.3,2096.1 L1554.2,2096.6 L1557.1,2097.3 L1560.0,2098.0 L1562.9,2098.8 L1565.8,2099.7 L1568.6,2100.7 L1571.4,2101.7 L1574.3,2102.7 L1577.0,2103.8 L1579.8,2104.9 L1582.6,2106.1 L1585.4,2107.3 L1588.1,2108.5 L1590.8,2109.7 L1593.5,2111.0 L1596.3,2112.3 L1599.0,2113.5 L1601.7,2114.7 L1604.5,2115.9 L1607.3,2116.9 L1610.1,2117.8 L1613.0,2118.7 L1615.9,2119.4 L1618.8,2120.0 L1621.8,2120.5 L1624.7,2121.0 L1627.7,2121.4 L1630.7,2121.7 L1633.6,2122.0 L1636.6,2122.2 L1639.6,2122.2 L1642.6,2122.3 L1645.6,2122.3 L1648.6,2122.2 L1651.6,2122.1 L1654.6,2122.0 L1657.6,2121.8 L1660.6,2121.5 L1663.6,2121.2 L1666.5,2120.7 L1669.5,2120.2 L1672.4,2119.6 L1675.3,2118.8 L1678.1,2118.0 L1681.0,2117.0 L1683.7,2115.9 L1686.4,2114.7 L1689.1,2113.3 L1691.6,2111.8 L1694.1,2110.1 L1696.5,2108.4 L1698.9,2106.6 L1701.3,2104.7 L1703.6,2102.8 L1705.9,2100.9 L1708.2,2099.0 L1710.5,2097.1 L1712.8,2095.2 L1715.2,2093.3 L1717.6,2091.5 L1720.0,2089.9 L1722.6,2088.3 L1725.2,2086.9 L1727.9,2085.5 L1730.6,2084.3 L1733.4,2083.2 L1736.2,2082.2 L1739.1,2081.3 L1741.9,2080.5 L1744.8,2079.8 L1747.7,2079.1 L1750.7,2078.6 L1753.6,2078.1 L1756.6,2077.7 L1759.6,2077.3 L1762.6,2077.0 L1765.5,2076.6 L1768.5,2076.2 L1771.4,2075.7 L1774.4,2075.1 L1777.3,2074.4 L1780.2,2073.6 L1783.0,2072.7 L1785.9,2071.8 L1788.7,2070.8 L1791.5,2069.8 L1794.3,2068.7 L1797.1,2067.5 L1799.8,2066.3 L1802.5,2064.9 L1805.1,2063.5 L1807.6,2062.0 L1810.1,2060.3 L1812.5,2058.5 L1814.9,2056.7 L1817.1,2054.7 L1819.3,2052.7 L1821.4,2050.6 L1823.5,2048.4 L1825.6,2046.2 L1827.6,2044.1 L1829.7,2041.9 L1831.9,2039.8 L1834.1,2037.9 L1836.4,2036.0 L1838.8,2034.2 L1841.3,2032.6 L1843.9,2031.2 L1846.6,2029.9 L1849.3,2028.8 L1852.1,2027.7 L1855.0,2026.8 L1857.9,2025.9 L1860.7,2025.1 L1863.7,2024.5 L1866.6,2023.9 L1869.5,2023.3 L1872.5,2023.0 L1875.5,2022.7 L1878.4,2022.6 L1881.4,2022.6 L1884.4,2022.8 L1887.4,2023.1 L1890.3,2023.5 L1893.3,2023.9 L1896.2,2024.5 L1899.1,2025.2 L1902.0,2026.0 L1904.9,2026.9 L1907.7,2027.8 L1910.5,2028.9 L1913.2,2030.2 L1915.9,2031.5 L1918.5,2032.9 L1921.1,2034.4 L1923.6,2036.0 L1926.2,2037.6 L1928.7,2039.3 L1931.2,2041.0 L1933.6,2042.6 L1936.1,2044.3 L1938.6,2046.0 L1941.0,2047.7 L1943.5,2049.5 L1946.0,2051.2 L1948.4,2052.9 L1950.9,2054.5 L1953.4,2056.2 L1956.0,2057.8 L1958.6,2059.3 L1961.2,2060.7 L1963.8,2062.1 L1966.5,2063.5 L1969.2,2064.7 L1972.0,2065.9 L1974.8,2066.9 L1977.6,2067.8 L1980.5,2068.5 L1983.4,2069.1 L1986.3,2069.6 L1989.0,2070.0 L1991.6,2070.3 L1993.8,2070.5 L1998.3,2070.9 L1998.3,2070.9" fill="none" stroke="#4a78ec" stroke-width="2.2"/></svg><div class="ax" style="left:685.4px;width:120px;text-align:center;top:2265px">01.01</div><div class="ax" style="left:776.1px;width:120px;text-align:center;top:2265px">09.01</div><div class="ax" style="left:864.0px;width:120px;text-align:center;top:2265px">17.01</div><div class="ax" style="left:953.2px;width:120px;text-align:center;top:2265px">25.01</div><div class="ax" style="left:1048.2px;width:120px;text-align:center;top:2265px">02.02</div><div class="ax" style="left:1144.1px;width:120px;text-align:center;top:2265px">10.02</div><div class="ax" style="left:1236.6px;width:120px;text-align:center;top:2265px">18.02</div><div class="ax" style="left:1331.9px;width:120px;text-align:center;top:2265px">26.02</div><div class="ax" style="left:1428.5px;width:120px;text-align:center;top:2265px">06.03</div><div class="ax" style="left:1524.7px;width:120px;text-align:center;top:2265px">14.03</div><div class="ax" style="left:1619.4px;width:120px;text-align:center;top:2265px">22.03</div><div class="ax" style="left:1716.6px;width:120px;text-align:center;top:2265px">30.03</div><div class="ax" style="left:1811.9px;width:120px;text-align:center;top:2265px">07.04</div><div class="ax" style="left:1906.0px;width:120px;text-align:center;top:2265px">15.04</div><div class="card" style="left:2080px;top:1777px;width:880px;height:560px"></div><div class="ttl" style="left:2120px;top:1822px">Эмоции</div><svg class="abs" style="left:2107px;top:1910.6999999999998px" width="380" height="380" viewBox="2107 1910.6999999999998 380 380"><circle cx="2297" cy="2100.7" r="171.8" fill="none" stroke="#e9ecf1" stroke-width="10.5"/><path d="M2302.50,1946.80 A154,154 0 0 1 2441.67,2047.91 L2405.50,2059.66 A116,116 0 0 0 2302.50,1984.83 Z" fill="#0fb185" stroke="#0fb185" stroke-width="2" stroke-linejoin="round"/><path d="M2301.3,1984.8 L2302.6,1946.8 M2309.7,1985.4 L2313.9,1947.6 M2318.1,1986.6 L2325.1,1949.3 M2326.4,1988.5 L2336.1,1951.7 M2334.6,1991.0 L2346.9,1955.0 M2342.5,1994.0 L2357.4,1959.0 M2350.2,1997.6 L2367.6,1963.9 M2357.6,2001.8 L2377.5,1969.4 M2364.7,2006.5 L2386.9,1975.6 M2371.4,2011.7 L2395.8,1982.6 M2377.7,2017.4 L2404.2,1990.1 M2383.6,2023.5 L2412.0,1998.3 M2389.0,2030.1 L2419.2,2007.0 M2394.0,2037.0 L2425.7,2016.2 M2398.4,2044.3 L2431.6,2025.8 M2402.2,2051.9 L2436.7,2035.9 M2405.5,2059.7 L2441.1,2046.3" stroke="rgba(0,0,0,0.09)" stroke-width="1"/><path d="M2445.07,2058.37 A154,154 0 0 1 2391.91,2221.98 L2369.56,2191.21 A116,116 0 0 0 2408.90,2070.13 Z" fill="#4277f2" stroke="#4277f2" stroke-width="2" stroke-linejoin="round"/><path d="M2408.6,2068.9 L2445.1,2058.5 M2410.6,2077.2 L2447.8,2069.5 M2412.0,2085.6 L2449.7,2080.6 M2412.8,2094.0 L2450.7,2091.8 M2413.0,2102.5 L2451.0,2103.1 M2412.5,2111.0 L2450.4,2114.4 M2411.5,2119.4 L2449.0,2125.6 M2409.8,2127.8 L2446.7,2136.7 M2407.5,2136.0 L2443.7,2147.5 M2404.6,2144.0 L2439.9,2158.1 M2401.2,2151.7 L2435.3,2168.5 M2397.2,2159.2 L2430.0,2178.4 M2392.6,2166.4 L2423.9,2187.9 M2387.5,2173.2 L2417.2,2197.0 M2382.0,2179.7 L2409.8,2205.5 M2376.0,2185.7 L2401.8,2213.5 M2369.5,2191.2 L2393.3,2220.9" stroke="rgba(0,0,0,0.09)" stroke-width="1"/><path d="M2383.01,2228.44 A154,154 0 0 1 2210.99,2228.44 L2233.34,2197.67 A116,116 0 0 0 2360.66,2197.67 Z" fill="#52aef2" stroke="#52aef2" stroke-width="2" stroke-linejoin="round"/><path d="M2361.7,2197.0 L2382.9,2228.5 M2354.5,2201.5 L2373.3,2234.5 M2346.9,2205.4 L2363.3,2239.7 M2339.1,2208.8 L2352.9,2244.2 M2331.1,2211.6 L2342.3,2247.9 M2322.9,2213.8 L2331.4,2250.8 M2314.5,2215.4 L2320.3,2252.9 M2306.1,2216.3 L2309.1,2254.2 M2297.6,2216.7 L2297.8,2254.7 M2289.1,2216.4 L2286.5,2254.3 M2280.7,2215.5 L2275.3,2253.2 M2272.3,2214.0 L2264.2,2251.2 M2264.1,2211.9 L2253.3,2248.4 M2256.0,2209.2 L2242.6,2244.8 M2248.2,2205.9 L2232.2,2240.4 M2240.6,2202.1 L2222.1,2235.3 M2233.3,2197.7 L2212.5,2229.4" stroke="rgba(0,0,0,0.09)" stroke-width="1"/><path d="M2202.09,2221.98 A154,154 0 0 1 2148.93,2058.37 L2185.10,2070.13 A116,116 0 0 0 2224.44,2191.21 Z" fill="#f4707d" stroke="#f4707d" stroke-width="2" stroke-linejoin="round"/><path d="M2225.4,2192.0 L2202.0,2221.9 M2218.9,2186.5 L2193.4,2214.6 M2212.9,2180.5 L2185.3,2206.7 M2207.2,2174.2 L2177.8,2198.2 M2202.1,2167.4 L2171.0,2189.3 M2197.5,2160.3 L2164.9,2179.8 M2193.4,2152.8 L2159.4,2169.9 M2189.8,2145.1 L2154.7,2159.6 M2186.9,2137.1 L2150.8,2149.1 M2184.5,2129.0 L2147.6,2138.2 M2182.7,2120.6 L2145.3,2127.2 M2181.6,2112.2 L2143.8,2116.0 M2181.0,2103.7 L2143.1,2104.7 M2181.1,2095.2 L2143.2,2093.4 M2181.8,2086.8 L2144.1,2082.2 M2183.2,2078.4 L2145.9,2071.1 M2185.1,2070.1 L2148.5,2060.1" stroke="rgba(0,0,0,0.09)" stroke-width="1"/><path d="M2152.33,2047.91 A154,154 0 0 1 2291.50,1946.80 L2291.50,1984.83 A116,116 0 0 0 2188.50,2059.66 Z" fill="#ffd466" stroke="#ffd466" stroke-width="2" stroke-linejoin="round"/><path d="M2188.1,2060.8 L2152.4,2047.8 M2191.3,2053.0 L2156.6,2037.3 M2195.1,2045.3 L2161.7,2027.2 M2199.4,2038.0 L2167.4,2017.5 M2204.2,2031.1 L2173.8,2008.2 M2209.6,2024.4 L2181.0,1999.5 M2215.4,2018.2 L2188.7,1991.2 M2221.7,2012.5 L2197.0,1983.6 M2228.3,2007.2 L2205.8,1976.6 M2235.4,2002.4 L2215.2,1970.2 M2242.7,1998.2 L2224.9,1964.6 M2250.4,1994.5 L2235.1,1959.7 M2258.3,1991.4 L2245.6,1955.5 M2266.4,1988.8 L2256.4,1952.2 M2274.7,1986.9 L2267.4,1949.6 M2283.1,1985.5 L2278.5,1947.8 M2291.5,1984.8 L2289.7,1946.9" stroke="rgba(0,0,0,0.09)" stroke-width="1"/></svg><div class="abs" style="left:2553.5px;top:1965.0px;width:28px;height:16px;border-radius:8px;background:#0fb185;border:1.5px solid #0c9a73"></div><div class="ax" style="left:2602px;top:1958px;color:#2e3138">Нейтральное</div><div class="abs" style="left:2553.5px;top:2029.0px;width:28px;height:16px;border-radius:8px;background:#4277f2;border:1.5px solid #3462d8"></div><div class="ax" style="left:2602px;top:2022px;color:#2e3138">Удивление</div><div class="abs" style="left:2553.5px;top:2093.0px;width:28px;height:16px;border-radius:8px;background:#52aef2;border:1.5px solid #3f98dc"></div><div class="ax" style="left:2602px;top:2086px;color:#2e3138">Счастье</div><div class="abs" style="left:2553.5px;top:2157.0px;width:28px;height:16px;border-radius:8px;background:#f4707d;border:1.5px solid #de5a68"></div><div class="ax" style="left:2602px;top:2150px;color:#2e3138">Грусть</div><div class="abs" style="left:2553.5px;top:2221.0px;width:28px;height:16px;border-radius:8px;background:#ffd466;border:1.5px solid #e8bb4a"></div><div class="ax" style="left:2602px;top:2214px;color:#2e3138">Злость</div><div class="card" style="left:3000px;top:1060px;width:780px;height:1249px"></div><div class="ttl" style="left:3040px;top:1104px;letter-spacing:0.7px">Плееры на карте</div><svg class="abs" style="left:3040px;top:1186px" width="700" height="1083" viewBox="0 0 700 1083"><defs><clipPath id="mc"><path d="M0,11 A11,11 0 0 1 11,0 H689 A11,11 0 0 1 700,11 V1083 H0 Z"/></clipPath><pattern id="hatch" width="8" height="8" patternUnits="userSpaceOnUse" patternTransform="rotate(45)"><rect width="8" height="8" fill="#f3f4f6"/><line x1="0" y1="0" x2="0" y2="8" stroke="#d9dbe0" stroke-width="1.5"/></pattern></defs><g clip-path="url(#mc)"><rect x="0" y="0" width="700" height="1083" fill="#f3f4f7"/><g transform="rotate(-15.5)"><rect x="64.4" y="334.9" width="245.1" height="32.4" fill="#ebecef" stroke="#e3e4e8" stroke-width="1"/><rect x="-26.8" y="244.4" width="57.7" height="36.0" fill="#ebecef" stroke="#e3e4e8" stroke-width="1"/><rect x="-91.1" y="282.4" width="50.5" height="72.1" fill="#ebecef" stroke="#e3e4e8" stroke-width="1"/><rect x="-22.7" y="431.6" width="50.5" height="36.0" fill="#ebecef" stroke="#e3e4e8" stroke-width="1"/><rect x="578.1" y="248.3" width="28.8" height="86.5" fill="#ebecef" stroke="#e3e4e8" stroke-width="1"/><rect x="513.5" y="323.0" width="57.7" height="28.8" fill="#ebecef" stroke="#e3e4e8" stroke-width="1"/><rect x="460.2" y="433.4" width="43.3" height="28.8" fill="#ebecef" stroke="#e3e4e8" stroke-width="1"/><rect x="371.7" y="467.3" width="28.8" height="57.7" fill="#ebecef" stroke="#e3e4e8" stroke-width="1"/><rect x="315.4" y="596.0" width="72.1" height="50.5" fill="#ebecef" stroke="#e3e4e8" stroke-width="1"/><rect x="302.8" y="737.5" width="28.8" height="122.6" fill="#ebecef" stroke="#e3e4e8" stroke-width="1"/><rect x="199.2" y="774.8" width="57.7" height="43.3" fill="#ebecef" stroke="#e3e4e8" stroke-width="1"/><rect x="-54.9" y="782.9" width="86.5" height="28.8" fill="#ebecef" stroke="#e3e4e8" stroke-width="1"/><rect x="-232.7" y="977.5" width="64.9" height="28.8" fill="#ebecef" stroke="#e3e4e8" stroke-width="1"/><rect x="129.9" y="937.5" width="72.1" height="57.7" fill="#ebecef" stroke="#e3e4e8" stroke-width="1"/><rect x="397.7" y="877.7" width="50.5" height="50.5" fill="#ebecef" stroke="#e3e4e8" stroke-width="1"/><rect x="225.6" y="451.6" width="21.6" height="36.0" fill="#ebecef" stroke="#e3e4e8" stroke-width="1"/><rect x="140.9" y="465.6" width="50.5" height="28.8" fill="#ebecef" stroke="#e3e4e8" stroke-width="1"/><rect x="-164.8" y="910.7" width="64.9" height="50.5" fill="#ebecef" stroke="#e3e4e8" stroke-width="1"/><rect x="351.6" y="979.7" width="43.3" height="43.3" fill="#ebecef" stroke="#e3e4e8" stroke-width="1"/><rect x="311.8" y="154.7" width="28.8" height="36.0" fill="#ebecef" stroke="#e3e4e8" stroke-width="1"/><rect x="369.0" y="182.5" width="21.6" height="25.2" fill="#ebecef" stroke="#e3e4e8" stroke-width="1"/><rect x="561.1" y="453.2" width="36.0" height="43.3" fill="#ebecef" stroke="#e3e4e8" stroke-width="1"/><rect x="-116.7" y="410.1" width="57.7" height="28.8" fill="#ebecef" stroke="#e3e4e8" stroke-width="1"/><rect x="-103.3" y="624.3" width="28.8" height="93.7" fill="#ebecef" stroke="#e3e4e8" stroke-width="1"/><rect x="403.2" y="933.0" width="28.8" height="86.5" fill="#ebecef" stroke="#e3e4e8" stroke-width="1"/><rect x="317.3" y="816.0" width="36.0" height="50.5" fill="#ebecef" stroke="#e3e4e8" stroke-width="1"/><rect x="56.8" y="26.4" width="90.1" height="21.6" fill="#ebecef" stroke="#e3e4e8" stroke-width="1"/><rect x="173.4" y="84.3" width="28.8" height="122.6" fill="#fdf4ea" stroke="#f6e8d8" stroke-width="1"/><rect x="70.9" y="86.0" width="28.8" height="129.8" fill="#fdf4ea" stroke="#f6e8d8" stroke-width="1"/><rect x="258.1" y="96.3" width="28.8" height="108.1" fill="#fdf4ea" stroke="#f6e8d8" stroke-width="1"/><rect x="337.9" y="359.7" width="32.4" height="180.2" fill="#fdf4ea" stroke="#f6e8d8" stroke-width="1"/><rect x="429.2" y="230.8" width="64.9" height="93.7" fill="#fdf4ea" stroke="#f6e8d8" stroke-width="1"/><rect x="447.5" y="388.3" width="93.7" height="28.8" fill="#fdf4ea" stroke="#f6e8d8" stroke-width="1"/><rect x="208.5" y="486.4" width="173.0" height="28.8" fill="#fdf4ea" stroke="#f6e8d8" stroke-width="1"/><rect x="140.6" y="634.6" width="137.0" height="28.8" fill="#fdf4ea" stroke="#f6e8d8" stroke-width="1"/><rect x="109.8" y="565.4" width="43.3" height="79.3" fill="#fdf4ea" stroke="#f6e8d8" stroke-width="1"/><rect x="-8.3" y="518.3" width="43.3" height="108.1" fill="#fdf4ea" stroke="#f6e8d8" stroke-width="1"/><rect x="77.2" y="719.9" width="57.7" height="115.4" fill="#fdf4ea" stroke="#f6e8d8" stroke-width="1"/><rect x="166.5" y="894.7" width="180.2" height="28.8" fill="#fdf4ea" stroke="#f6e8d8" stroke-width="1"/><rect x="385.7" y="708.1" width="28.8" height="122.6" fill="#fdf4ea" stroke="#f6e8d8" stroke-width="1"/><rect x="-96.8" y="797.2" width="57.7" height="28.8" fill="#fdf4ea" stroke="#f6e8d8" stroke-width="1"/><rect x="181.8" y="1080.5" width="216.3" height="64.9" fill="#fdf4ea" stroke="#f6e8d8" stroke-width="1"/><rect x="-233.6" y="925.3" width="93.7" height="36.0" fill="#fdf4ea" stroke="#f6e8d8" stroke-width="1"/><rect x="-175.9" y="1034.2" width="144.2" height="28.8" fill="#fdf4ea" stroke="#f6e8d8" stroke-width="1"/><rect x="-47.1" y="862.1" width="64.9" height="108.1" fill="#fdf4ea" stroke="#f6e8d8" stroke-width="1"/><rect x="120.7" y="1039.1" width="72.1" height="28.8" fill="#fdf4ea" stroke="#f6e8d8" stroke-width="1"/><rect x="87.6" y="238.3" width="28.8" height="28.8" fill="#fdf4ea" stroke="#f6e8d8" stroke-width="1"/><rect x="174.4" y="262.4" width="28.8" height="28.8" fill="#fdf4ea" stroke="#f6e8d8" stroke-width="1"/><rect x="280.2" y="257.3" width="36.0" height="32.4" fill="#fdf4ea" stroke="#f6e8d8" stroke-width="1"/><rect x="498.9" y="518.2" width="21.6" height="144.2" fill="#fdf4ea" stroke="#f6e8d8" stroke-width="1"/><rect x="300.1" y="1035.3" width="115.4" height="43.3" fill="#fdf4ea" stroke="#f6e8d8" stroke-width="1"/><rect x="-11.9" y="30.2" width="32.4" height="151.4" fill="#fdf4ea" stroke="#f6e8d8" stroke-width="1"/><rect x="-44.6" y="186.5" width="68.5" height="25.2" fill="#fdf4ea" stroke="#f6e8d8" stroke-width="1"/><rect x="430.8" y="137.0" width="100" height="90" fill="url(#hatch)"/></g><g transform="rotate(-15.5)"><line x1="40" y1="73.2" x2="700" y2="73.2" stroke="#dde0e5" stroke-width="10.5"/><line x1="40" y1="337.3" x2="355" y2="337.3" stroke="#dde0e5" stroke-width="12.5"/><line x1="40" y1="397.0" x2="400" y2="397.0" stroke="#dde0e5" stroke-width="11.5"/><line x1="-300" y1="476.0" x2="700" y2="476.0" stroke="#dde0e5" stroke-width="12.5"/><line x1="-300" y1="230.3" x2="700" y2="230.3" stroke="#dde0e5" stroke-width="15.5"/><line x1="-300" y1="539.6" x2="700" y2="539.6" stroke="#dde0e5" stroke-width="15.5"/><line x1="-300" y1="698.6" x2="700" y2="698.6" stroke="#dde0e5" stroke-width="15.5"/><line x1="-300" y1="862.4" x2="700" y2="862.4" stroke="#dde0e5" stroke-width="15.5"/><line x1="-300" y1="1027.2" x2="700" y2="1027.2" stroke="#dde0e5" stroke-width="15.5"/><line x1="-300" y1="1191.0" x2="700" y2="1191.0" stroke="#dde0e5" stroke-width="15.5"/></g><line x1="406.6" y1="126.2" x2="497.2" y2="422.1" stroke="#dde0e5" stroke-width="12.5"/><line x1="327.1" y1="634.3" x2="423.3" y2="948.6" stroke="#dde0e5" stroke-width="11.5"/><line x1="31.5" y1="485.3" x2="144.6" y2="854.9" stroke="#dde0e5" stroke-width="11.5"/><line x1="510.5" y1="753.4" x2="558.8" y2="911.0" stroke="#dde0e5" stroke-width="10.5"/><line x1="131.7" y1="39.5" x2="177.7" y2="189.7" stroke="#dde0e5" stroke-width="8.5"/><line x1="185.5" y1="24.6" x2="231.5" y2="174.8" stroke="#dde0e5" stroke-width="8.5"/><line x1="259.3" y1="4.1" x2="305.2" y2="154.4" stroke="#dde0e5" stroke-width="8.5"/><line x1="555.9" y1="-20.0" x2="585.5" y2="76.6" stroke="#dde0e5" stroke-width="8.5"/><line x1="542.8" y1="574.5" x2="590.7" y2="731.2" stroke="#dde0e5" stroke-width="8.5"/><line x1="30.9" y1="-20.0" x2="376.7" y2="1110.0" stroke="#dde0e5" stroke-width="15.5"/><line x1="433.9" y1="-20.0" x2="563.5" y2="403.7" stroke="#dde0e5" stroke-width="14.5"/><line x1="570.9" y1="401.7" x2="787.7" y2="1110.0" stroke="#dde0e5" stroke-width="14.5"/><g transform="rotate(-15.5)"><line x1="40" y1="73.2" x2="700" y2="73.2" stroke="#fff" stroke-width="8"/><line x1="40" y1="337.3" x2="355" y2="337.3" stroke="#fff" stroke-width="10"/><line x1="40" y1="397.0" x2="400" y2="397.0" stroke="#fff" stroke-width="9"/><line x1="-300" y1="476.0" x2="700" y2="476.0" stroke="#fff" stroke-width="10"/><line x1="-300" y1="230.3" x2="700" y2="230.3" stroke="#fff" stroke-width="13"/><line x1="-300" y1="539.6" x2="700" y2="539.6" stroke="#fff" stroke-width="13"/><line x1="-300" y1="698.6" x2="700" y2="698.6" stroke="#fff" stroke-width="13"/><line x1="-300" y1="862.4" x2="700" y2="862.4" stroke="#fff" stroke-width="13"/><line x1="-300" y1="1027.2" x2="700" y2="1027.2" stroke="#fff" stroke-width="13"/><line x1="-300" y1="1191.0" x2="700" y2="1191.0" stroke="#fff" stroke-width="13"/></g><line x1="406.6" y1="126.2" x2="497.2" y2="422.1" stroke="#fff" stroke-width="10"/><line x1="327.1" y1="634.3" x2="423.3" y2="948.6" stroke="#fff" stroke-width="9"/><line x1="31.5" y1="485.3" x2="144.6" y2="854.9" stroke="#fff" stroke-width="9"/><line x1="510.5" y1="753.4" x2="558.8" y2="911.0" stroke="#fff" stroke-width="8"/><line x1="131.7" y1="39.5" x2="177.7" y2="189.7" stroke="#fff" stroke-width="6"/><line x1="185.5" y1="24.6" x2="231.5" y2="174.8" stroke="#fff" stroke-width="6"/><line x1="259.3" y1="4.1" x2="305.2" y2="154.4" stroke="#fff" stroke-width="6"/><line x1="555.9" y1="-20.0" x2="585.5" y2="76.6" stroke="#fff" stroke-width="6"/><line x1="542.8" y1="574.5" x2="590.7" y2="731.2" stroke="#fff" stroke-width="6"/><line x1="30.9" y1="-20.0" x2="376.7" y2="1110.0" stroke="#fff" stroke-width="13"/><line x1="433.9" y1="-20.0" x2="563.5" y2="403.7" stroke="#fff" stroke-width="12"/><line x1="570.9" y1="401.7" x2="787.7" y2="1110.0" stroke="#fff" stroke-width="12"/><text x="128.3" y="39.7" transform="rotate(-15.5 128.3 39.7)" font-family="Liberation Sans" font-size="18" fill="#474b52" text-anchor="middle" dominant-baseline="middle" font-weight="400" stroke="#fff" stroke-width="3" paint-order="stroke">ул. Катаева</text><text x="200.4" y="180.2" transform="rotate(-15.5 200.4 180.2)" font-family="Liberation Sans" font-size="18" fill="#474b52" text-anchor="middle" dominant-baseline="middle" font-weight="400" stroke="#fff" stroke-width="3" paint-order="stroke">ул. Варфоломеева</text><text x="566.0" y="75.7" transform="rotate(-15.5 566.0 75.7)" font-family="Liberation Sans" font-size="18" fill="#474b52" text-anchor="middle" dominant-baseline="middle" font-weight="400" stroke="#fff" stroke-width="3" paint-order="stroke">ул. Варфоломеева</text><text x="216.3" y="288.4" transform="rotate(-15.5 216.3 288.4)" font-family="Liberation Sans" font-size="18" fill="#474b52" text-anchor="middle" dominant-baseline="middle" font-weight="400" stroke="#fff" stroke-width="3" paint-order="stroke">ул. Малюгиной</text><text x="562.4" y="400.1" transform="rotate(-15.5 562.4 400.1)" font-family="Liberation Sans" font-size="18" fill="#474b52" text-anchor="middle" dominant-baseline="middle" font-weight="400" stroke="#fff" stroke-width="3" paint-order="stroke">Филимоновская ул.</text><text x="295.6" y="479.5" transform="rotate(-15.5 295.6 479.5)" font-family="Liberation Sans" font-size="18" fill="#474b52" text-anchor="middle" dominant-baseline="middle" font-weight="400" stroke="#fff" stroke-width="3" paint-order="stroke">Филимоновская ул.</text><text x="338.9" y="634.5" transform="rotate(-15.5 338.9 634.5)" font-family="Liberation Sans" font-size="18" fill="#474b52" text-anchor="middle" dominant-baseline="middle" font-weight="400" stroke="#fff" stroke-width="3" paint-order="stroke">ул. Лермонтовская</text><text x="670.5" y="540.7" transform="rotate(-15.5 670.5 540.7)" font-family="Liberation Sans" font-size="18" fill="#474b52" text-anchor="middle" dominant-baseline="middle" font-weight="400" stroke="#fff" stroke-width="3" paint-order="stroke">ул. Лерм</text><text x="356.9" y="793.1" transform="rotate(-15.5 356.9 793.1)" font-family="Liberation Sans" font-size="18" fill="#474b52" text-anchor="middle" dominant-baseline="middle" font-weight="400" stroke="#fff" stroke-width="3" paint-order="stroke">ул. Тельмана</text><text x="418.2" y="944.5" transform="rotate(-15.5 418.2 944.5)" font-family="Liberation Sans" font-size="18" fill="#474b52" text-anchor="middle" dominant-baseline="middle" font-weight="400" stroke="#fff" stroke-width="3" paint-order="stroke">ул. Города Волос</text><text x="50.5" y="1059.8" transform="rotate(-15.5 50.5 1059.8)" font-family="Liberation Sans" font-size="18" fill="#474b52" text-anchor="middle" dominant-baseline="middle" font-weight="400" stroke="#fff" stroke-width="3" paint-order="stroke">рода Волос</text><text x="688.5" y="703.0" transform="rotate(-15.5 688.5 703.0)" font-family="Liberation Sans" font-size="18" fill="#474b52" text-anchor="middle" dominant-baseline="middle" font-weight="400" stroke="#fff" stroke-width="3" paint-order="stroke">ул.</text><text x="8.7" y="901.2" transform="rotate(-15.5 8.7 901.2)" font-family="Liberation Sans" font-size="18" fill="#474b52" text-anchor="middle" dominant-baseline="middle" font-weight="400" stroke="#fff" stroke-width="3" paint-order="stroke">на</text><text x="493.9" y="180.2" transform="rotate(73 493.9 180.2)" font-family="Liberation Sans" font-size="18" fill="#474b52" text-anchor="middle" dominant-baseline="middle" font-weight="400" stroke="#fff" stroke-width="3" paint-order="stroke">пер. Семашко</text><text x="594.8" y="479.5" transform="rotate(73 594.8 479.5)" font-family="Liberation Sans" font-size="18" fill="#474b52" text-anchor="middle" dominant-baseline="middle" font-weight="400" stroke="#fff" stroke-width="3" paint-order="stroke">пер. Семашко</text><text x="124.0" y="288.4" transform="rotate(73 124.0 288.4)" font-family="Liberation Sans" font-size="18" fill="#474b52" text-anchor="middle" dominant-baseline="middle" font-weight="400" stroke="#fff" stroke-width="3" paint-order="stroke">Соборный пер.</text><text x="216.3" y="594.8" transform="rotate(73 216.3 594.8)" font-family="Liberation Sans" font-size="18" fill="#474b52" text-anchor="middle" dominant-baseline="middle" font-weight="400" stroke="#fff" stroke-width="3" paint-order="stroke">Соборный пер.</text><text x="634.5" y="1059.8" transform="rotate(-15.5 634.5 1059.8)" font-family="Liberation Sans" font-size="19" fill="#474b52" text-anchor="middle" dominant-baseline="middle" font-weight="400" stroke="#fff" stroke-width="3" paint-order="stroke">Красноармейс</text><text x="28.8" y="155.0" transform="rotate(0 28.8 155.0)" font-family="Liberation Sans" font-size="15" fill="#222" text-anchor="middle" dominant-baseline="middle" font-weight="400" stroke="#fff" stroke-width="3" paint-order="stroke">ический</text><text x="345" y="10" font-family="Liberation Sans" font-size="21" fill="#d8373a" text-anchor="middle" stroke="#fff" stroke-width="3" paint-order="stroke">Медицинский</text><text x="345" y="29" font-family="Liberation Sans" font-size="21" fill="#d8373a" text-anchor="middle" stroke="#fff" stroke-width="3" paint-order="stroke">центр "Рождение"</text><path d="M395,73 C390,64 380,58 380,49 A15,15 0 0 1 410,49 C410,58 400,64 395,73 Z" fill="#e05b5b"/><text x="395" y="55" font-family="Liberation Sans" font-size="17" font-weight="700" fill="#fff" text-anchor="middle">H</text><text x="126" y="748" font-family="Liberation Sans" font-size="21.3" fill="#4f6b78" text-anchor="middle" stroke="#fff" stroke-width="3" paint-order="stroke">Военная Прокуратура</text><text x="117" y="769" font-family="Liberation Sans" font-size="21.5" fill="#4f6b78" text-anchor="middle" stroke="#fff" stroke-width="3" paint-order="stroke">Ростовского Гарнизона</text><path d="M250,766 C246,759 238,755 238,748 A12,12 0 0 1 262,748 C262,755 254,759 250,766 Z" fill="#7b909b"/><rect x="244" y="745" width="12" height="7" fill="#fff"/><path d="M420.7,397.7 L429.7,407.7 L438.7,397.7 Z" fill="#6634a8"/><circle cx="429.7" cy="367.7" r="28.9" fill="#fff" stroke="#6634a8" stroke-width="5.6"/><path d="M82.6,619 L91.6,629 L100.6,619 Z" fill="#6634a8"/><circle cx="91.6" cy="589" r="28.9" fill="#fff" stroke="#6634a8" stroke-width="5.6"/><path d="M484.9,788.5 L493.9,798.5 L502.9,788.5 Z" fill="#6634a8"/><circle cx="493.9" cy="758.5" r="28.9" fill="#fff" stroke="#6634a8" stroke-width="5.6"/></g></svg></body></html>
